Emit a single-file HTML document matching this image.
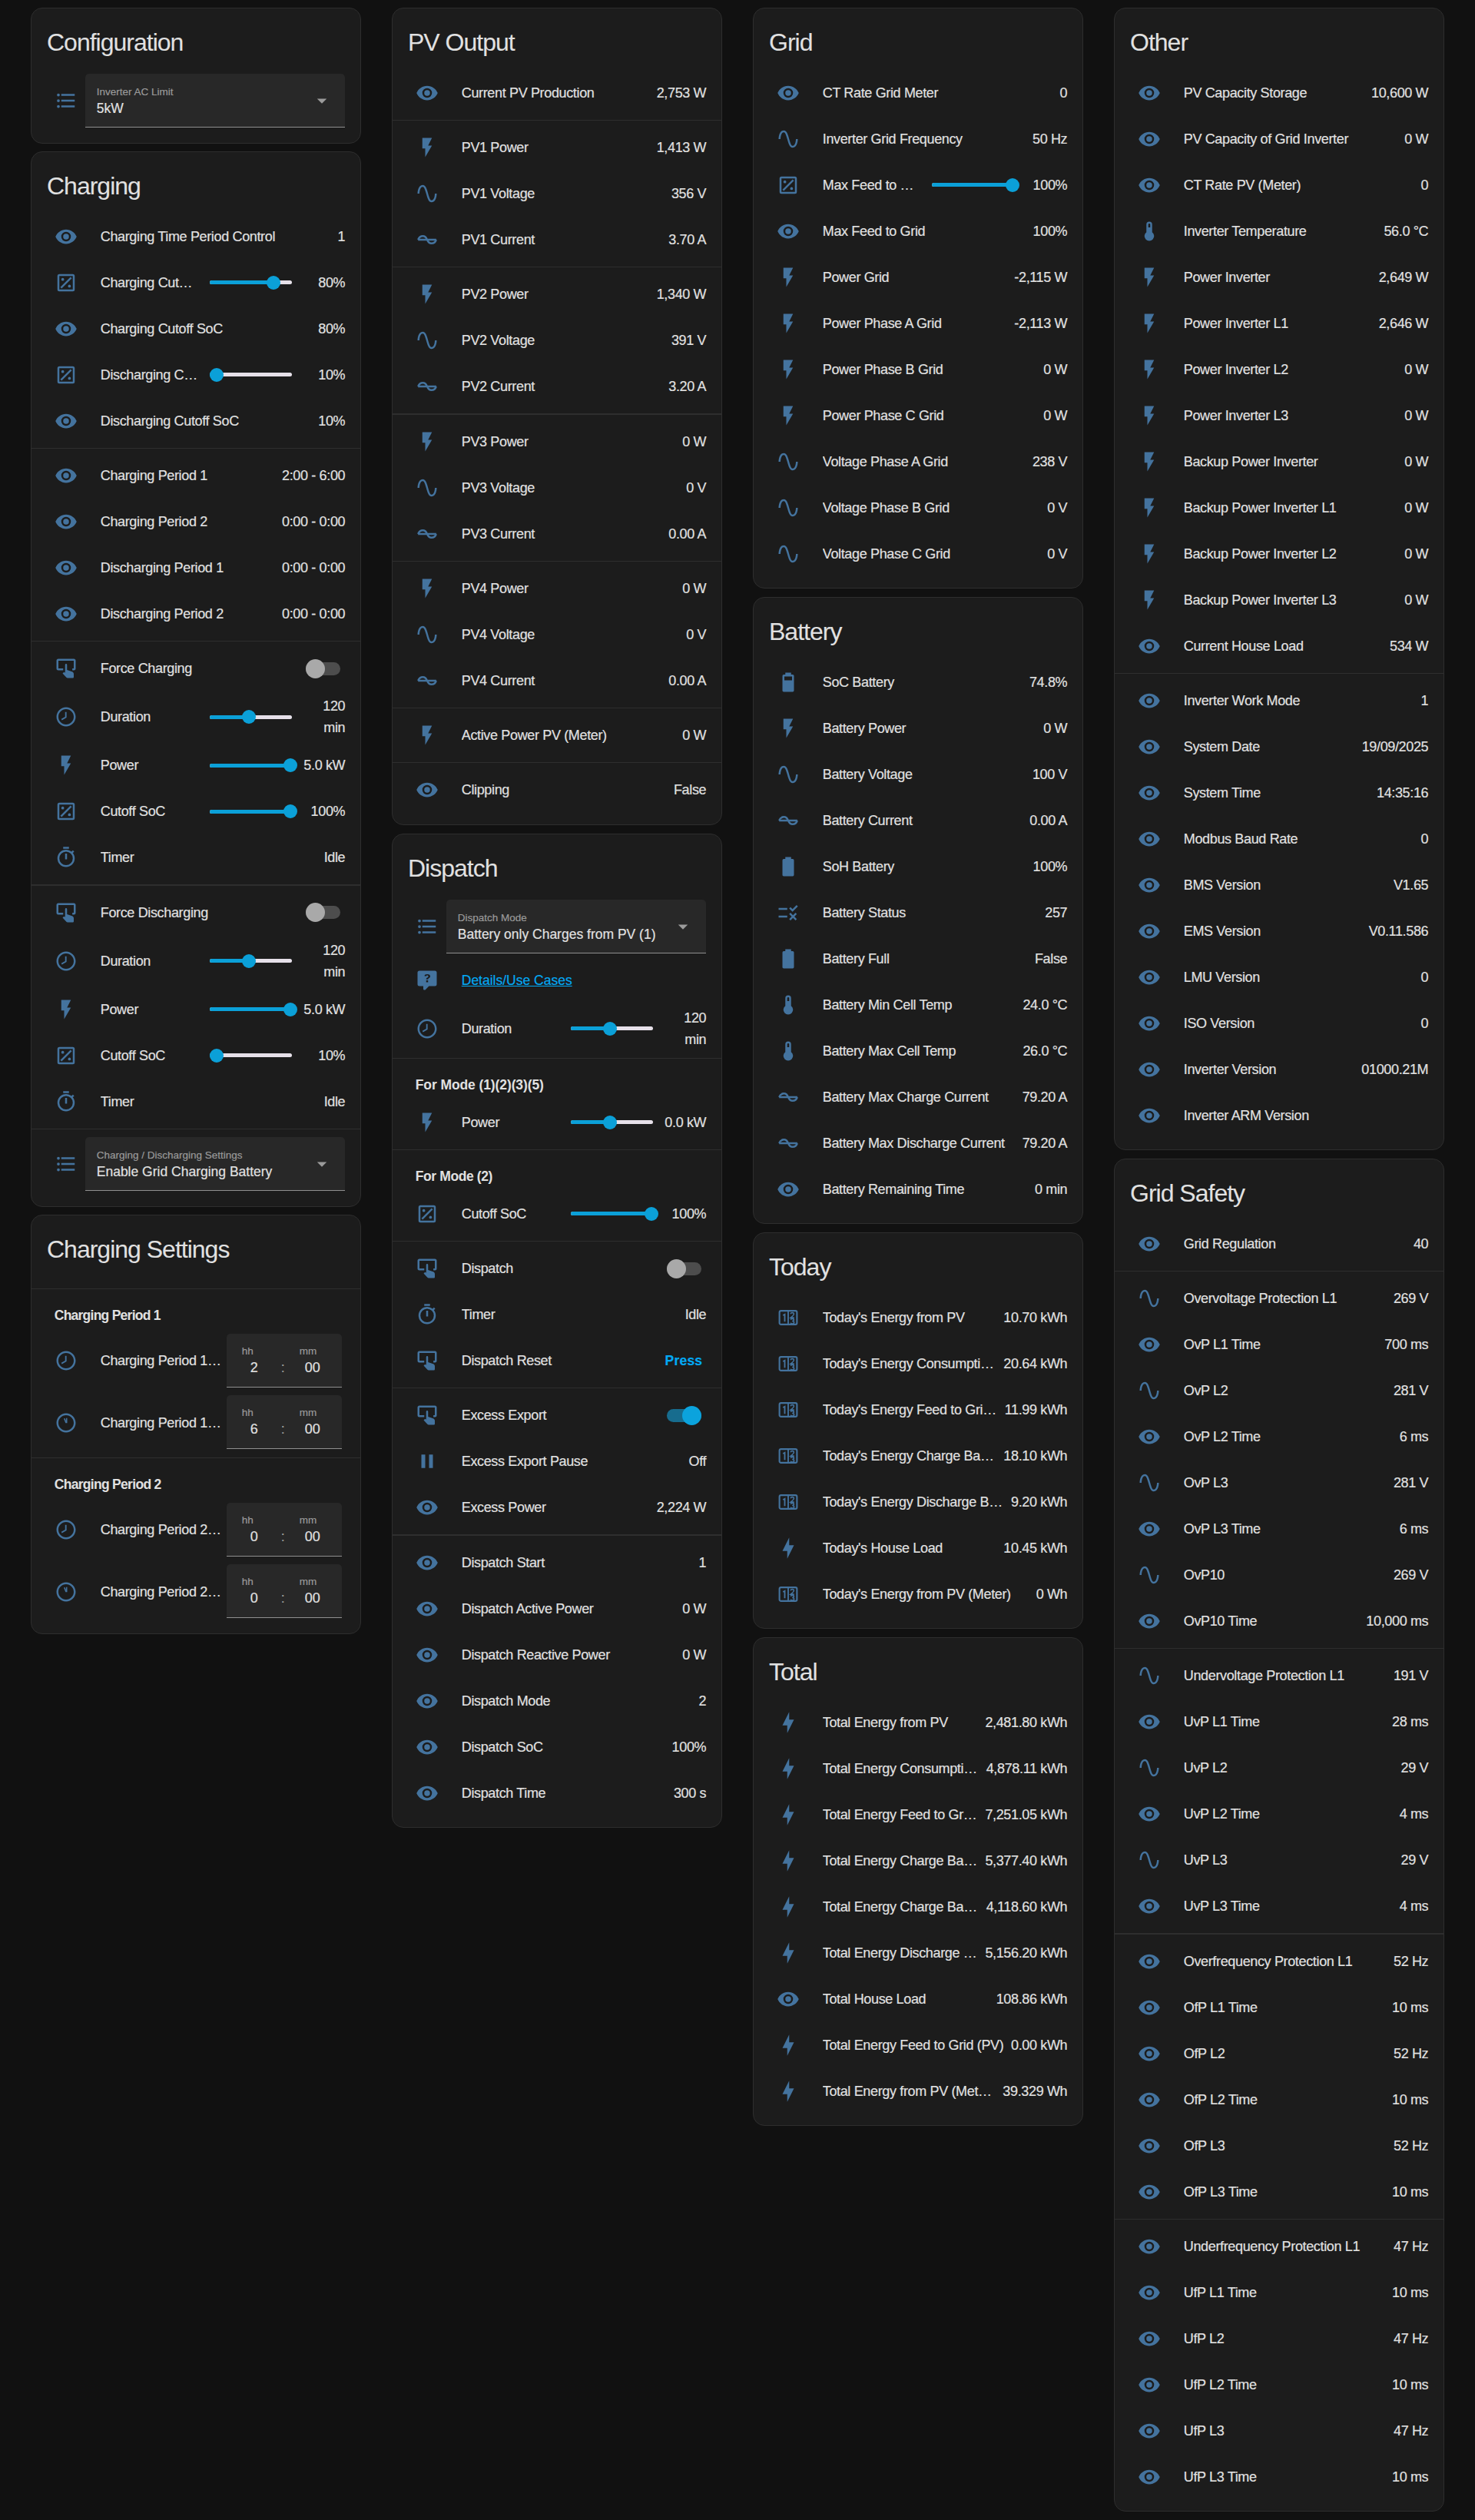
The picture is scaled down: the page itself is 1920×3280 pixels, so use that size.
<!DOCTYPE html><html><head><meta charset="utf-8"><title>Dashboard</title><style>
*{margin:0;padding:0;box-sizing:border-box}
html,body{width:1920px;height:3280px;background:#111111;overflow:hidden}
body{position:relative;font-family:"Liberation Sans",sans-serif;color:#e1e1e1;-webkit-font-smoothing:antialiased;-webkit-text-stroke:0.18px currentColor}
.card{position:absolute;width:430px;background:#1c1c1c;border:1.25px solid #2e2e2e;border-radius:15px}
.card>*{position:absolute}
.tt{left:20px;top:24.1px;font-size:32px;line-height:40px;letter-spacing:-1px;-webkit-text-stroke:0.05px currentColor;white-space:nowrap}
.ic{fill:#44739e;color:#44739e}
.lb{left:89.75px;height:50px;line-height:50px;font-size:18px;white-space:nowrap;letter-spacing:-0.35px}
.vl{right:19.75px;height:50px;line-height:50px;font-size:18px;white-space:nowrap;text-align:right;letter-spacing:-0.35px}
.v2{height:56px;line-height:28px}
.rw{left:89.75px;right:19.75px;height:50px;line-height:50px;font-size:18px;letter-spacing:-0.35px;display:flex;white-space:nowrap}
.rw .l{flex:1 1 auto;min-width:0;overflow:hidden;text-overflow:ellipsis}
.rw .v{flex:none;margin-left:8px}
.dv{left:-1.25px;right:-1.25px;height:1.25px;background:#2e2e2e}
.sec{left:29.75px;height:50px;line-height:50px;font-size:17.5px;font-weight:bold;letter-spacing:-0.6px;white-space:nowrap;-webkit-text-stroke:0}
.tr{left:231.75px;width:107px;height:5px;border-radius:3px;background:#e6e0e9}
.ta{left:231.75px;height:5px;border-radius:3px;background:#0ba0d8}
.th{width:18px;height:18px;border-radius:50%;background:#0ba0d8;margin-left:-1.25px}
.tg{left:356.75px;width:45px;height:17px;border-radius:9px;background:#4d4d4d}
.tk{left:356.75px;width:25px;height:25px;border-radius:50%;background:#a9a9a9}
.tg.on{background:#176c8e}
.tk.on{left:376.75px;background:#0ba3dd}
.bt{right:24.75px;height:50px;line-height:50px;font-size:17.5px;font-weight:bold;color:#03a9f4;letter-spacing:0.2px}
.lk{left:89.75px;height:50px;line-height:50px;font-size:17.5px;color:#03a9f4;text-decoration:underline}
.se{left:69.75px;width:338px;height:70px;background:#282828;border-radius:5px 5px 0 0;border-bottom:1.25px solid #8f8f8f}
.se>*{position:absolute}
.sl1{left:15px;top:14px;font-size:13.5px;line-height:20px;color:#9b9b9b;white-space:nowrap}
.sv{left:15px;top:33px;font-size:17.5px;line-height:24px;color:#e1e1e1;white-space:nowrap}
.dd{left:293px;top:20px;fill:#9b9b9b}
.ti{left:253.75px;width:150px;height:70px;background:#282828;border-radius:5px 5px 0 0;border-bottom:1.25px solid #8f8f8f}
.ti>*{position:absolute;white-space:nowrap}
.hh,.mm{top:14px;font-size:13.5px;line-height:18px;color:#9b9b9b}
.hh{left:20px}.mm{left:95px}
.hv,.mv,.co{top:32px;font-size:18px;line-height:24px}
.hv{left:31px}.mv{left:102px}.co{left:71px;color:#9b9b9b}
</style></head><body><div class="card" style="left:40px;top:10px;height:176.5px">
<div class="tt">Configuration</div>
<svg class="ic" style="left:29.75px;top:105px" width="30" height="30" viewBox="0 0 24 24"><path d="M7,5H21V7H7V5M7,13V11H21V13H7M4,4.5A1.5,1.5 0 0,1 5.5,6A1.5,1.5 0 0,1 4,7.5A1.5,1.5 0 0,1 2.5,6A1.5,1.5 0 0,1 4,4.5M4,10.5A1.5,1.5 0 0,1 5.5,12A1.5,1.5 0 0,1 4,13.5A1.5,1.5 0 0,1 2.5,12A1.5,1.5 0 0,1 4,10.5M7,19V17H21V19H7M4,16.5A1.5,1.5 0 0,1 5.5,18A1.5,1.5 0 0,1 4,19.5A1.5,1.5 0 0,1 2.5,18A1.5,1.5 0 0,1 4,16.5Z"/></svg><div class="se" style="top:84.75px"><div class="sl1">Inverter AC Limit</div><div class="sv">5kW</div><svg class="dd" width="30" height="30" viewBox="0 0 24 24"><path d="M7,10L12,15L17,10H7Z"/></svg></div>
</div>
<div class="card" style="left:40px;top:197px;height:1373.5px">
<div class="tt">Charging</div>
<svg class="ic" style="left:29.75px;top:94.75px" width="30" height="30" viewBox="0 0 24 24"><path d="M12,9A3,3 0 0,0 9,12A3,3 0 0,0 12,15A3,3 0 0,0 15,12A3,3 0 0,0 12,9M12,17A5,5 0 0,1 7,12A5,5 0 0,1 12,7A5,5 0 0,1 17,12A5,5 0 0,1 12,17M12,4.5C7,4.5 2.73,7.61 1,12C2.73,16.39 7,19.5 12,19.5C17,19.5 21.27,16.39 23,12C21.27,7.61 17,4.5 12,4.5Z"/></svg><div class="rw" style="top:84.75px"><span class="l">Charging Time Period Control</span><span class="v">1</span></div><svg class="ic" style="left:29.75px;top:154.75px" width="30" height="30" viewBox="0 0 24 24"><path d="M5 3H19A2 2 0 0 1 21 5V19A2 2 0 0 1 19 21H5A2 2 0 0 1 3 19V5A2 2 0 0 1 5 3M5 5V19H19V5Z" fill-rule="evenodd"/><path d="M16.6 6L18 7.4L7.4 18L6 16.6Z"/><circle cx="8.5" cy="8.5" r="1.5"/><circle cx="15.5" cy="15.5" r="1.5"/></svg><div class="lb sl" style="top:144.75px">Charging Cut…</div><div class="tr" style="top:167.25px"></div><div class="ta" style="top:167.25px;width:83.66px"></div><div class="th" style="top:160.75px;left:307.66px"></div><div class="vl" style="top:144.75px">80%</div><svg class="ic" style="left:29.75px;top:214.75px" width="30" height="30" viewBox="0 0 24 24"><path d="M12,9A3,3 0 0,0 9,12A3,3 0 0,0 12,15A3,3 0 0,0 15,12A3,3 0 0,0 12,9M12,17A5,5 0 0,1 7,12A5,5 0 0,1 12,7A5,5 0 0,1 17,12A5,5 0 0,1 12,17M12,4.5C7,4.5 2.73,7.61 1,12C2.73,16.39 7,19.5 12,19.5C17,19.5 21.27,16.39 23,12C21.27,7.61 17,4.5 12,4.5Z"/></svg><div class="rw" style="top:204.75px"><span class="l">Charging Cutoff SoC</span><span class="v">80%</span></div><svg class="ic" style="left:29.75px;top:274.75px" width="30" height="30" viewBox="0 0 24 24"><path d="M5 3H19A2 2 0 0 1 21 5V19A2 2 0 0 1 19 21H5A2 2 0 0 1 3 19V5A2 2 0 0 1 5 3M5 5V19H19V5Z" fill-rule="evenodd"/><path d="M16.6 6L18 7.4L7.4 18L6 16.6Z"/><circle cx="8.5" cy="8.5" r="1.5"/><circle cx="15.5" cy="15.5" r="1.5"/></svg><div class="lb sl" style="top:264.75px">Discharging C…</div><div class="tr" style="top:287.25px"></div><div class="ta" style="top:287.25px;width:8.97px"></div><div class="th" style="top:280.75px;left:232.97px"></div><div class="vl" style="top:264.75px">10%</div><svg class="ic" style="left:29.75px;top:334.75px" width="30" height="30" viewBox="0 0 24 24"><path d="M12,9A3,3 0 0,0 9,12A3,3 0 0,0 12,15A3,3 0 0,0 15,12A3,3 0 0,0 12,9M12,17A5,5 0 0,1 7,12A5,5 0 0,1 12,7A5,5 0 0,1 17,12A5,5 0 0,1 12,17M12,4.5C7,4.5 2.73,7.61 1,12C2.73,16.39 7,19.5 12,19.5C17,19.5 21.27,16.39 23,12C21.27,7.61 17,4.5 12,4.5Z"/></svg><div class="rw" style="top:324.75px"><span class="l">Discharging Cutoff SoC</span><span class="v">10%</span></div><div class="dv" style="top:384.75px"></div><svg class="ic" style="left:29.75px;top:406px" width="30" height="30" viewBox="0 0 24 24"><path d="M12,9A3,3 0 0,0 9,12A3,3 0 0,0 12,15A3,3 0 0,0 15,12A3,3 0 0,0 12,9M12,17A5,5 0 0,1 7,12A5,5 0 0,1 12,7A5,5 0 0,1 17,12A5,5 0 0,1 12,17M12,4.5C7,4.5 2.73,7.61 1,12C2.73,16.39 7,19.5 12,19.5C17,19.5 21.27,16.39 23,12C21.27,7.61 17,4.5 12,4.5Z"/></svg><div class="rw" style="top:396px"><span class="l">Charging Period 1</span><span class="v">2:00 - 6:00</span></div><svg class="ic" style="left:29.75px;top:466px" width="30" height="30" viewBox="0 0 24 24"><path d="M12,9A3,3 0 0,0 9,12A3,3 0 0,0 12,15A3,3 0 0,0 15,12A3,3 0 0,0 12,9M12,17A5,5 0 0,1 7,12A5,5 0 0,1 12,7A5,5 0 0,1 17,12A5,5 0 0,1 12,17M12,4.5C7,4.5 2.73,7.61 1,12C2.73,16.39 7,19.5 12,19.5C17,19.5 21.27,16.39 23,12C21.27,7.61 17,4.5 12,4.5Z"/></svg><div class="rw" style="top:456px"><span class="l">Charging Period 2</span><span class="v">0:00 - 0:00</span></div><svg class="ic" style="left:29.75px;top:526px" width="30" height="30" viewBox="0 0 24 24"><path d="M12,9A3,3 0 0,0 9,12A3,3 0 0,0 12,15A3,3 0 0,0 15,12A3,3 0 0,0 12,9M12,17A5,5 0 0,1 7,12A5,5 0 0,1 12,7A5,5 0 0,1 17,12A5,5 0 0,1 12,17M12,4.5C7,4.5 2.73,7.61 1,12C2.73,16.39 7,19.5 12,19.5C17,19.5 21.27,16.39 23,12C21.27,7.61 17,4.5 12,4.5Z"/></svg><div class="rw" style="top:516px"><span class="l">Discharging Period 1</span><span class="v">0:00 - 0:00</span></div><svg class="ic" style="left:29.75px;top:586px" width="30" height="30" viewBox="0 0 24 24"><path d="M12,9A3,3 0 0,0 9,12A3,3 0 0,0 12,15A3,3 0 0,0 15,12A3,3 0 0,0 12,9M12,17A5,5 0 0,1 7,12A5,5 0 0,1 12,7A5,5 0 0,1 17,12A5,5 0 0,1 12,17M12,4.5C7,4.5 2.73,7.61 1,12C2.73,16.39 7,19.5 12,19.5C17,19.5 21.27,16.39 23,12C21.27,7.61 17,4.5 12,4.5Z"/></svg><div class="rw" style="top:576px"><span class="l">Discharging Period 2</span><span class="v">0:00 - 0:00</span></div><div class="dv" style="top:636px"></div><svg class="ic" style="left:29.75px;top:657.25px" width="30" height="30" viewBox="0 0 24 24"><path d="M4 2H20A2 2 0 0 1 22 4V12A2 2 0 0 1 20 14H18.5V12H20V4H4V12H9V14H4A2 2 0 0 1 2 12V4A2 2 0 0 1 4 2Z"/><path d="M11 8.2A1 1 0 0 1 13 8.2V13.6L18.3 15.4C19.4 15.8 20 16.7 20 17.8V21A1 1 0 0 1 19 22H13.6C13.1 22 12.6 21.8 12.3 21.4L8.4 17.2L9.2 16.4C9.5 16.1 9.9 16 10.3 16.1L11 16.4Z"/></svg><div class="lb" style="top:647.25px">Force Charging</div><div class="tg" style="top:663.75px"></div><div class="tk" style="top:659.75px"></div><svg class="ic" style="left:29.75px;top:720.25px" width="30" height="30" viewBox="0 0 24 24"><path d="M12 2C6.5 2 2 6.5 2 12C2 17.5 6.5 22 12 22C17.5 22 22 17.5 22 12S17.5 2 12 2M12 20C7.59 20 4 16.41 4 12S7.59 4 12 4 20 7.59 20 12 16.41 20 12 20M12.5 12.8L7.7 15.6L7 14.2L11 11.9V7H12.5V12.8Z"/></svg><div class="lb sl" style="top:710.25px">Duration</div><div class="tr" style="top:732.75px"></div><div class="ta" style="top:732.75px;width:51.65px"></div><div class="th" style="top:726.25px;left:275.65px"></div><div class="vl v2" style="top:707.25px">120<br>min</div><svg class="ic" style="left:29.75px;top:783.25px" width="30" height="30" viewBox="0 0 24 24"><path d="M7,2V13H10V22L17,10H13L17,2H7Z"/></svg><div class="lb sl" style="top:773.25px">Power</div><div class="tr" style="top:795.75px"></div><div class="ta" style="top:795.75px;width:105px"></div><div class="th" style="top:789.25px;left:329px"></div><div class="vl" style="top:773.25px">5.0 kW</div><svg class="ic" style="left:29.75px;top:843.25px" width="30" height="30" viewBox="0 0 24 24"><path d="M5 3H19A2 2 0 0 1 21 5V19A2 2 0 0 1 19 21H5A2 2 0 0 1 3 19V5A2 2 0 0 1 5 3M5 5V19H19V5Z" fill-rule="evenodd"/><path d="M16.6 6L18 7.4L7.4 18L6 16.6Z"/><circle cx="8.5" cy="8.5" r="1.5"/><circle cx="15.5" cy="15.5" r="1.5"/></svg><div class="lb sl" style="top:833.25px">Cutoff SoC</div><div class="tr" style="top:855.75px"></div><div class="ta" style="top:855.75px;width:105px"></div><div class="th" style="top:849.25px;left:329px"></div><div class="vl" style="top:833.25px">100%</div><svg class="ic" style="left:29.75px;top:903.25px" width="30" height="30" viewBox="0 0 24 24"><path d="M12,20A7,7 0 0,1 5,13A7,7 0 0,1 12,6A7,7 0 0,1 19,13A7,7 0 0,1 12,20M19.03,7.39L20.45,5.97C20,5.46 19.55,5 19.04,4.56L17.62,6C16.07,4.74 14.12,4 12,4A9,9 0 0,0 3,13A9,9 0 0,0 12,22C17,22 21,17.97 21,13C21,10.88 20.26,8.93 19.03,7.39M11,14H13V8H11M15,1H9V3H15V1Z"/></svg><div class="rw" style="top:893.25px"><span class="l">Timer</span><span class="v">Idle</span></div><div class="dv" style="top:953.25px"></div><svg class="ic" style="left:29.75px;top:974.5px" width="30" height="30" viewBox="0 0 24 24"><path d="M4 2H20A2 2 0 0 1 22 4V12A2 2 0 0 1 20 14H18.5V12H20V4H4V12H9V14H4A2 2 0 0 1 2 12V4A2 2 0 0 1 4 2Z"/><path d="M11 8.2A1 1 0 0 1 13 8.2V13.6L18.3 15.4C19.4 15.8 20 16.7 20 17.8V21A1 1 0 0 1 19 22H13.6C13.1 22 12.6 21.8 12.3 21.4L8.4 17.2L9.2 16.4C9.5 16.1 9.9 16 10.3 16.1L11 16.4Z"/></svg><div class="lb" style="top:964.5px">Force Discharging</div><div class="tg" style="top:981px"></div><div class="tk" style="top:977px"></div><svg class="ic" style="left:29.75px;top:1037.5px" width="30" height="30" viewBox="0 0 24 24"><path d="M12 2C6.5 2 2 6.5 2 12C2 17.5 6.5 22 12 22C17.5 22 22 17.5 22 12S17.5 2 12 2M12 20C7.59 20 4 16.41 4 12S7.59 4 12 4 20 7.59 20 12 16.41 20 12 20M12.5 12.8L7.7 15.6L7 14.2L11 11.9V7H12.5V12.8Z"/></svg><div class="lb sl" style="top:1027.5px">Duration</div><div class="tr" style="top:1050px"></div><div class="ta" style="top:1050px;width:51.65px"></div><div class="th" style="top:1043.5px;left:275.65px"></div><div class="vl v2" style="top:1024.5px">120<br>min</div><svg class="ic" style="left:29.75px;top:1100.5px" width="30" height="30" viewBox="0 0 24 24"><path d="M7,2V13H10V22L17,10H13L17,2H7Z"/></svg><div class="lb sl" style="top:1090.5px">Power</div><div class="tr" style="top:1113px"></div><div class="ta" style="top:1113px;width:105px"></div><div class="th" style="top:1106.5px;left:329px"></div><div class="vl" style="top:1090.5px">5.0 kW</div><svg class="ic" style="left:29.75px;top:1160.5px" width="30" height="30" viewBox="0 0 24 24"><path d="M5 3H19A2 2 0 0 1 21 5V19A2 2 0 0 1 19 21H5A2 2 0 0 1 3 19V5A2 2 0 0 1 5 3M5 5V19H19V5Z" fill-rule="evenodd"/><path d="M16.6 6L18 7.4L7.4 18L6 16.6Z"/><circle cx="8.5" cy="8.5" r="1.5"/><circle cx="15.5" cy="15.5" r="1.5"/></svg><div class="lb sl" style="top:1150.5px">Cutoff SoC</div><div class="tr" style="top:1173px"></div><div class="ta" style="top:1173px;width:8.97px"></div><div class="th" style="top:1166.5px;left:232.97px"></div><div class="vl" style="top:1150.5px">10%</div><svg class="ic" style="left:29.75px;top:1220.5px" width="30" height="30" viewBox="0 0 24 24"><path d="M12,20A7,7 0 0,1 5,13A7,7 0 0,1 12,6A7,7 0 0,1 19,13A7,7 0 0,1 12,20M19.03,7.39L20.45,5.97C20,5.46 19.55,5 19.04,4.56L17.62,6C16.07,4.74 14.12,4 12,4A9,9 0 0,0 3,13A9,9 0 0,0 12,22C17,22 21,17.97 21,13C21,10.88 20.26,8.93 19.03,7.39M11,14H13V8H11M15,1H9V3H15V1Z"/></svg><div class="rw" style="top:1210.5px"><span class="l">Timer</span><span class="v">Idle</span></div><div class="dv" style="top:1270.5px"></div><svg class="ic" style="left:29.75px;top:1302px" width="30" height="30" viewBox="0 0 24 24"><path d="M7,5H21V7H7V5M7,13V11H21V13H7M4,4.5A1.5,1.5 0 0,1 5.5,6A1.5,1.5 0 0,1 4,7.5A1.5,1.5 0 0,1 2.5,6A1.5,1.5 0 0,1 4,4.5M4,10.5A1.5,1.5 0 0,1 5.5,12A1.5,1.5 0 0,1 4,13.5A1.5,1.5 0 0,1 2.5,12A1.5,1.5 0 0,1 4,10.5M7,19V17H21V19H7M4,16.5A1.5,1.5 0 0,1 5.5,18A1.5,1.5 0 0,1 4,19.5A1.5,1.5 0 0,1 2.5,18A1.5,1.5 0 0,1 4,16.5Z"/></svg><div class="se" style="top:1281.75px"><div class="sl1">Charging / Discharging Settings</div><div class="sv">Enable Grid Charging Battery</div><svg class="dd" width="30" height="30" viewBox="0 0 24 24"><path d="M7,10L12,15L17,10H7Z"/></svg></div>
</div>
<div class="card" style="left:40px;top:1581px;height:546px">
<div class="tt">Charging Settings</div>
<div class="dv" style="top:94.75px"></div><div class="sec" style="top:104.75px;letter-spacing:-0.75px">Charging Period 1</div><svg class="ic" style="left:29.75px;top:174px" width="30" height="30" viewBox="0 0 24 24"><path d="M12 2C6.5 2 2 6.5 2 12C2 17.5 6.5 22 12 22C17.5 22 22 17.5 22 12S17.5 2 12 2M12 20C7.59 20 4 16.41 4 12S7.59 4 12 4 20 7.59 20 12 16.41 20 12 20M12.5 12.8L7.7 15.6L7 14.2L11 11.9V7H12.5V12.8Z"/></svg><div class="lb tl" style="top:164px">Charging Period 1…</div><div class="ti" style="top:153.75px"><span class="hh">hh</span><span class="mm">mm</span><span class="hv">2</span><span class="co">:</span><span class="mv">00</span></div><svg class="ic" style="left:29.75px;top:254.5px" width="30" height="30" viewBox="0 0 24 24"><path d="M12 2C6.5 2 2 6.5 2 12C2 17.5 6.5 22 12 22C17.5 22 22 17.5 22 12S17.5 2 12 2M12 20C7.59 20 4 16.41 4 12S7.59 4 12 4 20 7.59 20 12 16.41 20 12 20M12.6 12.2H11.4L9.6 7.6L10.9 7.1L12 9.9V7H13.2V12.2Z"/></svg><div class="lb tl" style="top:244.5px">Charging Period 1…</div><div class="ti" style="top:234.25px"><span class="hh">hh</span><span class="mm">mm</span><span class="hv">6</span><span class="co">:</span><span class="mv">00</span></div><div class="dv" style="top:314.75px"></div><div class="sec" style="top:324.75px;letter-spacing:-0.7px">Charging Period 2</div><svg class="ic" style="left:29.75px;top:394px" width="30" height="30" viewBox="0 0 24 24"><path d="M12 2C6.5 2 2 6.5 2 12C2 17.5 6.5 22 12 22C17.5 22 22 17.5 22 12S17.5 2 12 2M12 20C7.59 20 4 16.41 4 12S7.59 4 12 4 20 7.59 20 12 16.41 20 12 20M12.5 12.8L7.7 15.6L7 14.2L11 11.9V7H12.5V12.8Z"/></svg><div class="lb tl" style="top:384px">Charging Period 2…</div><div class="ti" style="top:373.75px"><span class="hh">hh</span><span class="mm">mm</span><span class="hv">0</span><span class="co">:</span><span class="mv">00</span></div><svg class="ic" style="left:29.75px;top:474.5px" width="30" height="30" viewBox="0 0 24 24"><path d="M12 2C6.5 2 2 6.5 2 12C2 17.5 6.5 22 12 22C17.5 22 22 17.5 22 12S17.5 2 12 2M12 20C7.59 20 4 16.41 4 12S7.59 4 12 4 20 7.59 20 12 16.41 20 12 20M12.6 12.2H11.4L9.6 7.6L10.9 7.1L12 9.9V7H13.2V12.2Z"/></svg><div class="lb tl" style="top:464.5px">Charging Period 2…</div><div class="ti" style="top:454.25px"><span class="hh">hh</span><span class="mm">mm</span><span class="hv">0</span><span class="co">:</span><span class="mv">00</span></div>
</div>
<div class="card" style="left:510px;top:10px;height:1063.5px">
<div class="tt">PV Output</div>
<svg class="ic" style="left:29.75px;top:94.75px" width="30" height="30" viewBox="0 0 24 24"><path d="M12,9A3,3 0 0,0 9,12A3,3 0 0,0 12,15A3,3 0 0,0 15,12A3,3 0 0,0 12,9M12,17A5,5 0 0,1 7,12A5,5 0 0,1 12,7A5,5 0 0,1 17,12A5,5 0 0,1 12,17M12,4.5C7,4.5 2.73,7.61 1,12C2.73,16.39 7,19.5 12,19.5C17,19.5 21.27,16.39 23,12C21.27,7.61 17,4.5 12,4.5Z"/></svg><div class="rw" style="top:84.75px"><span class="l">Current PV Production</span><span class="v">2,753 W</span></div><div class="dv" style="top:144.75px"></div><svg class="ic" style="left:29.75px;top:166px" width="30" height="30" viewBox="0 0 24 24"><path d="M7,2V13H10V22L17,10H13L17,2H7Z"/></svg><div class="rw" style="top:156px"><span class="l">PV1 Power</span><span class="v">1,413 W</span></div><svg class="ic" style="left:29.75px;top:226px" width="30" height="30" viewBox="0 0 24 24"><path d="M16.5,21C13.5,21 12.31,16.76 11.05,12.28C10.14,9.04 9,5 7.5,5C4.11,5 4,11.93 4,12H2C2,11.63 2.06,3 7.5,3C10.5,3 11.71,7.25 12.97,11.72C13.83,14.8 15,19 16.5,19C19.94,19 20.03,12.07 20.03,12H22.03C22.03,12.37 21.97,21 16.5,21Z"/></svg><div class="rw" style="top:216px"><span class="l">PV1 Voltage</span><span class="v">356 V</span></div><svg class="ic" style="left:29.75px;top:286px" width="30" height="30" viewBox="0 0 24 24"><path d="M2.5 12H21.5M2.5 12C4 8.6 6 8.2 7.5 8.2S11 9.5 12 12S15 15.8 16.5 15.8S20.5 15 21.5 12" fill="none" stroke="currentColor" stroke-width="1.9"/></svg><div class="rw" style="top:276px"><span class="l">PV1 Current</span><span class="v">3.70 A</span></div><div class="dv" style="top:336px"></div><svg class="ic" style="left:29.75px;top:357.25px" width="30" height="30" viewBox="0 0 24 24"><path d="M7,2V13H10V22L17,10H13L17,2H7Z"/></svg><div class="rw" style="top:347.25px"><span class="l">PV2 Power</span><span class="v">1,340 W</span></div><svg class="ic" style="left:29.75px;top:417.25px" width="30" height="30" viewBox="0 0 24 24"><path d="M16.5,21C13.5,21 12.31,16.76 11.05,12.28C10.14,9.04 9,5 7.5,5C4.11,5 4,11.93 4,12H2C2,11.63 2.06,3 7.5,3C10.5,3 11.71,7.25 12.97,11.72C13.83,14.8 15,19 16.5,19C19.94,19 20.03,12.07 20.03,12H22.03C22.03,12.37 21.97,21 16.5,21Z"/></svg><div class="rw" style="top:407.25px"><span class="l">PV2 Voltage</span><span class="v">391 V</span></div><svg class="ic" style="left:29.75px;top:477.25px" width="30" height="30" viewBox="0 0 24 24"><path d="M2.5 12H21.5M2.5 12C4 8.6 6 8.2 7.5 8.2S11 9.5 12 12S15 15.8 16.5 15.8S20.5 15 21.5 12" fill="none" stroke="currentColor" stroke-width="1.9"/></svg><div class="rw" style="top:467.25px"><span class="l">PV2 Current</span><span class="v">3.20 A</span></div><div class="dv" style="top:527.25px"></div><svg class="ic" style="left:29.75px;top:548.5px" width="30" height="30" viewBox="0 0 24 24"><path d="M7,2V13H10V22L17,10H13L17,2H7Z"/></svg><div class="rw" style="top:538.5px"><span class="l">PV3 Power</span><span class="v">0 W</span></div><svg class="ic" style="left:29.75px;top:608.5px" width="30" height="30" viewBox="0 0 24 24"><path d="M16.5,21C13.5,21 12.31,16.76 11.05,12.28C10.14,9.04 9,5 7.5,5C4.11,5 4,11.93 4,12H2C2,11.63 2.06,3 7.5,3C10.5,3 11.71,7.25 12.97,11.72C13.83,14.8 15,19 16.5,19C19.94,19 20.03,12.07 20.03,12H22.03C22.03,12.37 21.97,21 16.5,21Z"/></svg><div class="rw" style="top:598.5px"><span class="l">PV3 Voltage</span><span class="v">0 V</span></div><svg class="ic" style="left:29.75px;top:668.5px" width="30" height="30" viewBox="0 0 24 24"><path d="M2.5 12H21.5M2.5 12C4 8.6 6 8.2 7.5 8.2S11 9.5 12 12S15 15.8 16.5 15.8S20.5 15 21.5 12" fill="none" stroke="currentColor" stroke-width="1.9"/></svg><div class="rw" style="top:658.5px"><span class="l">PV3 Current</span><span class="v">0.00 A</span></div><div class="dv" style="top:718.5px"></div><svg class="ic" style="left:29.75px;top:739.75px" width="30" height="30" viewBox="0 0 24 24"><path d="M7,2V13H10V22L17,10H13L17,2H7Z"/></svg><div class="rw" style="top:729.75px"><span class="l">PV4 Power</span><span class="v">0 W</span></div><svg class="ic" style="left:29.75px;top:799.75px" width="30" height="30" viewBox="0 0 24 24"><path d="M16.5,21C13.5,21 12.31,16.76 11.05,12.28C10.14,9.04 9,5 7.5,5C4.11,5 4,11.93 4,12H2C2,11.63 2.06,3 7.5,3C10.5,3 11.71,7.25 12.97,11.72C13.83,14.8 15,19 16.5,19C19.94,19 20.03,12.07 20.03,12H22.03C22.03,12.37 21.97,21 16.5,21Z"/></svg><div class="rw" style="top:789.75px"><span class="l">PV4 Voltage</span><span class="v">0 V</span></div><svg class="ic" style="left:29.75px;top:859.75px" width="30" height="30" viewBox="0 0 24 24"><path d="M2.5 12H21.5M2.5 12C4 8.6 6 8.2 7.5 8.2S11 9.5 12 12S15 15.8 16.5 15.8S20.5 15 21.5 12" fill="none" stroke="currentColor" stroke-width="1.9"/></svg><div class="rw" style="top:849.75px"><span class="l">PV4 Current</span><span class="v">0.00 A</span></div><div class="dv" style="top:909.75px"></div><svg class="ic" style="left:29.75px;top:931px" width="30" height="30" viewBox="0 0 24 24"><path d="M7,2V13H10V22L17,10H13L17,2H7Z"/></svg><div class="rw" style="top:921px"><span class="l">Active Power PV (Meter)</span><span class="v">0 W</span></div><div class="dv" style="top:981px"></div><svg class="ic" style="left:29.75px;top:1002.25px" width="30" height="30" viewBox="0 0 24 24"><path d="M12,9A3,3 0 0,0 9,12A3,3 0 0,0 12,15A3,3 0 0,0 15,12A3,3 0 0,0 12,9M12,17A5,5 0 0,1 7,12A5,5 0 0,1 12,7A5,5 0 0,1 17,12A5,5 0 0,1 12,17M12,4.5C7,4.5 2.73,7.61 1,12C2.73,16.39 7,19.5 12,19.5C17,19.5 21.27,16.39 23,12C21.27,7.61 17,4.5 12,4.5Z"/></svg><div class="rw" style="top:992.25px"><span class="l">Clipping</span><span class="v">False</span></div>
</div>
<div class="card" style="left:510px;top:1085px;height:1293.75px">
<div class="tt">Dispatch</div>
<svg class="ic" style="left:29.75px;top:104.75px" width="30" height="30" viewBox="0 0 24 24"><path d="M7,5H21V7H7V5M7,13V11H21V13H7M4,4.5A1.5,1.5 0 0,1 5.5,6A1.5,1.5 0 0,1 4,7.5A1.5,1.5 0 0,1 2.5,6A1.5,1.5 0 0,1 4,4.5M4,10.5A1.5,1.5 0 0,1 5.5,12A1.5,1.5 0 0,1 4,13.5A1.5,1.5 0 0,1 2.5,12A1.5,1.5 0 0,1 4,10.5M7,19V17H21V19H7M4,16.5A1.5,1.5 0 0,1 5.5,18A1.5,1.5 0 0,1 4,19.5A1.5,1.5 0 0,1 2.5,18A1.5,1.5 0 0,1 4,16.5Z"/></svg><div class="se" style="top:84.75px"><div class="sl1">Dispatch Mode</div><div class="sv">Battery only Charges from PV (1)</div><svg class="dd" width="30" height="30" viewBox="0 0 24 24"><path d="M7,10L12,15L17,10H7Z"/></svg></div><svg class="ic" style="left:29.75px;top:174.75px" width="30" height="30" viewBox="0 0 24 24"><path d="M4,2H20A2,2 0 0,1 22,4V16A2,2 0 0,1 20,18H13.9L10.2,21.71C10,21.9 9.75,22 9.5,22H9A1,1 0 0,1 8,21V18H4A2,2 0 0,1 2,16V4A2,2 0 0,1 4,2Z"/><path fill="#1c1c1c" d="M12.19,5.5C11.3,5.5 10.59,5.68 10.05,6.04C9.5,6.4 9.22,7 9.27,7.69H11.24C11.24,7.41 11.34,7.2 11.5,7.06C11.7,6.92 11.92,6.85 12.19,6.85C12.5,6.85 12.77,6.93 12.95,7.11C13.13,7.28 13.22,7.5 13.22,7.8C13.22,8.08 13.14,8.33 13,8.54C12.83,8.76 12.62,8.94 12.36,9.08C11.84,9.4 11.5,9.68 11.29,9.92C11.1,10.16 11,10.5 11,11H13C13,10.72 13.05,10.5 13.14,10.32C13.23,10.15 13.4,10 13.66,9.85C14.12,9.64 14.5,9.36 14.79,9C15.08,8.63 15.23,8.24 15.23,7.8C15.23,7.1 14.96,6.54 14.42,6.12C13.88,5.71 13.13,5.5 12.19,5.5M11,12V14H13V12H11Z"/></svg><div class="lk" style="top:164.75px">Details/Use Cases</div><svg class="ic" style="left:29.75px;top:237.75px" width="30" height="30" viewBox="0 0 24 24"><path d="M12 2C6.5 2 2 6.5 2 12C2 17.5 6.5 22 12 22C17.5 22 22 17.5 22 12S17.5 2 12 2M12 20C7.59 20 4 16.41 4 12S7.59 4 12 4 20 7.59 20 12 16.41 20 12 20M12.5 12.8L7.7 15.6L7 14.2L11 11.9V7H12.5V12.8Z"/></svg><div class="lb sl" style="top:227.75px">Duration</div><div class="tr" style="top:250.25px"></div><div class="ta" style="top:250.25px;width:51.65px"></div><div class="th" style="top:243.75px;left:275.65px"></div><div class="vl v2" style="top:224.75px">120<br>min</div><div class="dv" style="top:290.75px"></div><div class="sec" style="top:300.75px;letter-spacing:-0.1px">For Mode (1)(2)(3)(5)</div><svg class="ic" style="left:29.75px;top:359.75px" width="30" height="30" viewBox="0 0 24 24"><path d="M7,2V13H10V22L17,10H13L17,2H7Z"/></svg><div class="lb sl" style="top:349.75px">Power</div><div class="tr" style="top:372.25px"></div><div class="ta" style="top:372.25px;width:51.65px"></div><div class="th" style="top:365.75px;left:275.65px"></div><div class="vl" style="top:349.75px">0.0 kW</div><div class="dv" style="top:409.75px"></div><div class="sec" style="top:419.75px;letter-spacing:-0.4px">For Mode (2)</div><svg class="ic" style="left:29.75px;top:478.75px" width="30" height="30" viewBox="0 0 24 24"><path d="M5 3H19A2 2 0 0 1 21 5V19A2 2 0 0 1 19 21H5A2 2 0 0 1 3 19V5A2 2 0 0 1 5 3M5 5V19H19V5Z" fill-rule="evenodd"/><path d="M16.6 6L18 7.4L7.4 18L6 16.6Z"/><circle cx="8.5" cy="8.5" r="1.5"/><circle cx="15.5" cy="15.5" r="1.5"/></svg><div class="lb sl" style="top:468.75px">Cutoff SoC</div><div class="tr" style="top:491.25px"></div><div class="ta" style="top:491.25px;width:105px"></div><div class="th" style="top:484.75px;left:329px"></div><div class="vl" style="top:468.75px">100%</div><div class="dv" style="top:528.75px"></div><svg class="ic" style="left:29.75px;top:550px" width="30" height="30" viewBox="0 0 24 24"><path d="M4 2H20A2 2 0 0 1 22 4V12A2 2 0 0 1 20 14H18.5V12H20V4H4V12H9V14H4A2 2 0 0 1 2 12V4A2 2 0 0 1 4 2Z"/><path d="M11 8.2A1 1 0 0 1 13 8.2V13.6L18.3 15.4C19.4 15.8 20 16.7 20 17.8V21A1 1 0 0 1 19 22H13.6C13.1 22 12.6 21.8 12.3 21.4L8.4 17.2L9.2 16.4C9.5 16.1 9.9 16 10.3 16.1L11 16.4Z"/></svg><div class="lb" style="top:540px">Dispatch</div><div class="tg" style="top:556.5px"></div><div class="tk" style="top:552.5px"></div><svg class="ic" style="left:29.75px;top:610px" width="30" height="30" viewBox="0 0 24 24"><path d="M12,20A7,7 0 0,1 5,13A7,7 0 0,1 12,6A7,7 0 0,1 19,13A7,7 0 0,1 12,20M19.03,7.39L20.45,5.97C20,5.46 19.55,5 19.04,4.56L17.62,6C16.07,4.74 14.12,4 12,4A9,9 0 0,0 3,13A9,9 0 0,0 12,22C17,22 21,17.97 21,13C21,10.88 20.26,8.93 19.03,7.39M11,14H13V8H11M15,1H9V3H15V1Z"/></svg><div class="rw" style="top:600px"><span class="l">Timer</span><span class="v">Idle</span></div><svg class="ic" style="left:29.75px;top:670px" width="30" height="30" viewBox="0 0 24 24"><path d="M4 2H20A2 2 0 0 1 22 4V12A2 2 0 0 1 20 14H18.5V12H20V4H4V12H9V14H4A2 2 0 0 1 2 12V4A2 2 0 0 1 4 2Z"/><path d="M11 8.2A1 1 0 0 1 13 8.2V13.6L18.3 15.4C19.4 15.8 20 16.7 20 17.8V21A1 1 0 0 1 19 22H13.6C13.1 22 12.6 21.8 12.3 21.4L8.4 17.2L9.2 16.4C9.5 16.1 9.9 16 10.3 16.1L11 16.4Z"/></svg><div class="lb" style="top:660px">Dispatch Reset</div><div class="bt" style="top:660px">Press</div><div class="dv" style="top:720px"></div><svg class="ic" style="left:29.75px;top:741.25px" width="30" height="30" viewBox="0 0 24 24"><path d="M4 2H20A2 2 0 0 1 22 4V12A2 2 0 0 1 20 14H18.5V12H20V4H4V12H9V14H4A2 2 0 0 1 2 12V4A2 2 0 0 1 4 2Z"/><path d="M11 8.2A1 1 0 0 1 13 8.2V13.6L18.3 15.4C19.4 15.8 20 16.7 20 17.8V21A1 1 0 0 1 19 22H13.6C13.1 22 12.6 21.8 12.3 21.4L8.4 17.2L9.2 16.4C9.5 16.1 9.9 16 10.3 16.1L11 16.4Z"/></svg><div class="lb" style="top:731.25px">Excess Export</div><div class="tg on" style="top:747.75px"></div><div class="tk on" style="top:743.75px"></div><svg class="ic" style="left:29.75px;top:801.25px" width="30" height="30" viewBox="0 0 24 24"><path d="M14,19H18V5H14M6,19H10V5H6V19Z"/></svg><div class="rw" style="top:791.25px"><span class="l">Excess Export Pause</span><span class="v">Off</span></div><svg class="ic" style="left:29.75px;top:861.25px" width="30" height="30" viewBox="0 0 24 24"><path d="M12,9A3,3 0 0,0 9,12A3,3 0 0,0 12,15A3,3 0 0,0 15,12A3,3 0 0,0 12,9M12,17A5,5 0 0,1 7,12A5,5 0 0,1 12,7A5,5 0 0,1 17,12A5,5 0 0,1 12,17M12,4.5C7,4.5 2.73,7.61 1,12C2.73,16.39 7,19.5 12,19.5C17,19.5 21.27,16.39 23,12C21.27,7.61 17,4.5 12,4.5Z"/></svg><div class="rw" style="top:851.25px"><span class="l">Excess Power</span><span class="v">2,224 W</span></div><div class="dv" style="top:911.25px"></div><svg class="ic" style="left:29.75px;top:932.5px" width="30" height="30" viewBox="0 0 24 24"><path d="M12,9A3,3 0 0,0 9,12A3,3 0 0,0 12,15A3,3 0 0,0 15,12A3,3 0 0,0 12,9M12,17A5,5 0 0,1 7,12A5,5 0 0,1 12,7A5,5 0 0,1 17,12A5,5 0 0,1 12,17M12,4.5C7,4.5 2.73,7.61 1,12C2.73,16.39 7,19.5 12,19.5C17,19.5 21.27,16.39 23,12C21.27,7.61 17,4.5 12,4.5Z"/></svg><div class="rw" style="top:922.5px"><span class="l">Dispatch Start</span><span class="v">1</span></div><svg class="ic" style="left:29.75px;top:992.5px" width="30" height="30" viewBox="0 0 24 24"><path d="M12,9A3,3 0 0,0 9,12A3,3 0 0,0 12,15A3,3 0 0,0 15,12A3,3 0 0,0 12,9M12,17A5,5 0 0,1 7,12A5,5 0 0,1 12,7A5,5 0 0,1 17,12A5,5 0 0,1 12,17M12,4.5C7,4.5 2.73,7.61 1,12C2.73,16.39 7,19.5 12,19.5C17,19.5 21.27,16.39 23,12C21.27,7.61 17,4.5 12,4.5Z"/></svg><div class="rw" style="top:982.5px"><span class="l">Dispatch Active Power</span><span class="v">0 W</span></div><svg class="ic" style="left:29.75px;top:1052.5px" width="30" height="30" viewBox="0 0 24 24"><path d="M12,9A3,3 0 0,0 9,12A3,3 0 0,0 12,15A3,3 0 0,0 15,12A3,3 0 0,0 12,9M12,17A5,5 0 0,1 7,12A5,5 0 0,1 12,7A5,5 0 0,1 17,12A5,5 0 0,1 12,17M12,4.5C7,4.5 2.73,7.61 1,12C2.73,16.39 7,19.5 12,19.5C17,19.5 21.27,16.39 23,12C21.27,7.61 17,4.5 12,4.5Z"/></svg><div class="rw" style="top:1042.5px"><span class="l">Dispatch Reactive Power</span><span class="v">0 W</span></div><svg class="ic" style="left:29.75px;top:1112.5px" width="30" height="30" viewBox="0 0 24 24"><path d="M12,9A3,3 0 0,0 9,12A3,3 0 0,0 12,15A3,3 0 0,0 15,12A3,3 0 0,0 12,9M12,17A5,5 0 0,1 7,12A5,5 0 0,1 12,7A5,5 0 0,1 17,12A5,5 0 0,1 12,17M12,4.5C7,4.5 2.73,7.61 1,12C2.73,16.39 7,19.5 12,19.5C17,19.5 21.27,16.39 23,12C21.27,7.61 17,4.5 12,4.5Z"/></svg><div class="rw" style="top:1102.5px"><span class="l">Dispatch Mode</span><span class="v">2</span></div><svg class="ic" style="left:29.75px;top:1172.5px" width="30" height="30" viewBox="0 0 24 24"><path d="M12,9A3,3 0 0,0 9,12A3,3 0 0,0 12,15A3,3 0 0,0 15,12A3,3 0 0,0 12,9M12,17A5,5 0 0,1 7,12A5,5 0 0,1 12,7A5,5 0 0,1 17,12A5,5 0 0,1 12,17M12,4.5C7,4.5 2.73,7.61 1,12C2.73,16.39 7,19.5 12,19.5C17,19.5 21.27,16.39 23,12C21.27,7.61 17,4.5 12,4.5Z"/></svg><div class="rw" style="top:1162.5px"><span class="l">Dispatch SoC</span><span class="v">100%</span></div><svg class="ic" style="left:29.75px;top:1232.5px" width="30" height="30" viewBox="0 0 24 24"><path d="M12,9A3,3 0 0,0 9,12A3,3 0 0,0 12,15A3,3 0 0,0 15,12A3,3 0 0,0 12,9M12,17A5,5 0 0,1 7,12A5,5 0 0,1 12,7A5,5 0 0,1 17,12A5,5 0 0,1 12,17M12,4.5C7,4.5 2.73,7.61 1,12C2.73,16.39 7,19.5 12,19.5C17,19.5 21.27,16.39 23,12C21.27,7.61 17,4.5 12,4.5Z"/></svg><div class="rw" style="top:1222.5px"><span class="l">Dispatch Time</span><span class="v">300 s</span></div>
</div>
<div class="card" style="left:980px;top:10px;height:756px">
<div class="tt">Grid</div>
<svg class="ic" style="left:29.75px;top:94.75px" width="30" height="30" viewBox="0 0 24 24"><path d="M12,9A3,3 0 0,0 9,12A3,3 0 0,0 12,15A3,3 0 0,0 15,12A3,3 0 0,0 12,9M12,17A5,5 0 0,1 7,12A5,5 0 0,1 12,7A5,5 0 0,1 17,12A5,5 0 0,1 12,17M12,4.5C7,4.5 2.73,7.61 1,12C2.73,16.39 7,19.5 12,19.5C17,19.5 21.27,16.39 23,12C21.27,7.61 17,4.5 12,4.5Z"/></svg><div class="rw" style="top:84.75px"><span class="l">CT Rate Grid Meter</span><span class="v">0</span></div><svg class="ic" style="left:29.75px;top:154.75px" width="30" height="30" viewBox="0 0 24 24"><path d="M16.5,21C13.5,21 12.31,16.76 11.05,12.28C10.14,9.04 9,5 7.5,5C4.11,5 4,11.93 4,12H2C2,11.63 2.06,3 7.5,3C10.5,3 11.71,7.25 12.97,11.72C13.83,14.8 15,19 16.5,19C19.94,19 20.03,12.07 20.03,12H22.03C22.03,12.37 21.97,21 16.5,21Z"/></svg><div class="rw" style="top:144.75px"><span class="l">Inverter Grid Frequency</span><span class="v">50 Hz</span></div><svg class="ic" style="left:29.75px;top:214.75px" width="30" height="30" viewBox="0 0 24 24"><path d="M5 3H19A2 2 0 0 1 21 5V19A2 2 0 0 1 19 21H5A2 2 0 0 1 3 19V5A2 2 0 0 1 5 3M5 5V19H19V5Z" fill-rule="evenodd"/><path d="M16.6 6L18 7.4L7.4 18L6 16.6Z"/><circle cx="8.5" cy="8.5" r="1.5"/><circle cx="15.5" cy="15.5" r="1.5"/></svg><div class="lb sl" style="top:204.75px">Max Feed to …</div><div class="tr" style="top:227.25px"></div><div class="ta" style="top:227.25px;width:105px"></div><div class="th" style="top:220.75px;left:329px"></div><div class="vl" style="top:204.75px">100%</div><svg class="ic" style="left:29.75px;top:274.75px" width="30" height="30" viewBox="0 0 24 24"><path d="M12,9A3,3 0 0,0 9,12A3,3 0 0,0 12,15A3,3 0 0,0 15,12A3,3 0 0,0 12,9M12,17A5,5 0 0,1 7,12A5,5 0 0,1 12,7A5,5 0 0,1 17,12A5,5 0 0,1 12,17M12,4.5C7,4.5 2.73,7.61 1,12C2.73,16.39 7,19.5 12,19.5C17,19.5 21.27,16.39 23,12C21.27,7.61 17,4.5 12,4.5Z"/></svg><div class="rw" style="top:264.75px"><span class="l">Max Feed to Grid</span><span class="v">100%</span></div><svg class="ic" style="left:29.75px;top:334.75px" width="30" height="30" viewBox="0 0 24 24"><path d="M7,2V13H10V22L17,10H13L17,2H7Z"/></svg><div class="rw" style="top:324.75px"><span class="l">Power Grid</span><span class="v">-2,115 W</span></div><svg class="ic" style="left:29.75px;top:394.75px" width="30" height="30" viewBox="0 0 24 24"><path d="M7,2V13H10V22L17,10H13L17,2H7Z"/></svg><div class="rw" style="top:384.75px"><span class="l">Power Phase A Grid</span><span class="v">-2,113 W</span></div><svg class="ic" style="left:29.75px;top:454.75px" width="30" height="30" viewBox="0 0 24 24"><path d="M7,2V13H10V22L17,10H13L17,2H7Z"/></svg><div class="rw" style="top:444.75px"><span class="l">Power Phase B Grid</span><span class="v">0 W</span></div><svg class="ic" style="left:29.75px;top:514.75px" width="30" height="30" viewBox="0 0 24 24"><path d="M7,2V13H10V22L17,10H13L17,2H7Z"/></svg><div class="rw" style="top:504.75px"><span class="l">Power Phase C Grid</span><span class="v">0 W</span></div><svg class="ic" style="left:29.75px;top:574.75px" width="30" height="30" viewBox="0 0 24 24"><path d="M16.5,21C13.5,21 12.31,16.76 11.05,12.28C10.14,9.04 9,5 7.5,5C4.11,5 4,11.93 4,12H2C2,11.63 2.06,3 7.5,3C10.5,3 11.71,7.25 12.97,11.72C13.83,14.8 15,19 16.5,19C19.94,19 20.03,12.07 20.03,12H22.03C22.03,12.37 21.97,21 16.5,21Z"/></svg><div class="rw" style="top:564.75px"><span class="l">Voltage Phase A Grid</span><span class="v">238 V</span></div><svg class="ic" style="left:29.75px;top:634.75px" width="30" height="30" viewBox="0 0 24 24"><path d="M16.5,21C13.5,21 12.31,16.76 11.05,12.28C10.14,9.04 9,5 7.5,5C4.11,5 4,11.93 4,12H2C2,11.63 2.06,3 7.5,3C10.5,3 11.71,7.25 12.97,11.72C13.83,14.8 15,19 16.5,19C19.94,19 20.03,12.07 20.03,12H22.03C22.03,12.37 21.97,21 16.5,21Z"/></svg><div class="rw" style="top:624.75px"><span class="l">Voltage Phase B Grid</span><span class="v">0 V</span></div><svg class="ic" style="left:29.75px;top:694.75px" width="30" height="30" viewBox="0 0 24 24"><path d="M16.5,21C13.5,21 12.31,16.76 11.05,12.28C10.14,9.04 9,5 7.5,5C4.11,5 4,11.93 4,12H2C2,11.63 2.06,3 7.5,3C10.5,3 11.71,7.25 12.97,11.72C13.83,14.8 15,19 16.5,19C19.94,19 20.03,12.07 20.03,12H22.03C22.03,12.37 21.97,21 16.5,21Z"/></svg><div class="rw" style="top:684.75px"><span class="l">Voltage Phase C Grid</span><span class="v">0 V</span></div>
</div>
<div class="card" style="left:980px;top:777px;height:816px">
<div class="tt">Battery</div>
<svg class="ic" style="left:29.75px;top:94.75px" width="30" height="30" viewBox="0 0 24 24"><path fill-rule="evenodd" d="M16,10H8V6H16ZM16.67,4H15V2H9V4H7.33A1.33,1.33 0 0,0 6,5.33V20.67C6,21.4 6.6,22 7.33,22H16.67A1.33,1.33 0 0,0 18,20.67V5.33C18,4.6 17.4,4 16.67,4Z"/></svg><div class="rw" style="top:84.75px"><span class="l">SoC Battery</span><span class="v">74.8%</span></div><svg class="ic" style="left:29.75px;top:154.75px" width="30" height="30" viewBox="0 0 24 24"><path d="M7,2V13H10V22L17,10H13L17,2H7Z"/></svg><div class="rw" style="top:144.75px"><span class="l">Battery Power</span><span class="v">0 W</span></div><svg class="ic" style="left:29.75px;top:214.75px" width="30" height="30" viewBox="0 0 24 24"><path d="M16.5,21C13.5,21 12.31,16.76 11.05,12.28C10.14,9.04 9,5 7.5,5C4.11,5 4,11.93 4,12H2C2,11.63 2.06,3 7.5,3C10.5,3 11.71,7.25 12.97,11.72C13.83,14.8 15,19 16.5,19C19.94,19 20.03,12.07 20.03,12H22.03C22.03,12.37 21.97,21 16.5,21Z"/></svg><div class="rw" style="top:204.75px"><span class="l">Battery Voltage</span><span class="v">100 V</span></div><svg class="ic" style="left:29.75px;top:274.75px" width="30" height="30" viewBox="0 0 24 24"><path d="M2.5 12H21.5M2.5 12C4 8.6 6 8.2 7.5 8.2S11 9.5 12 12S15 15.8 16.5 15.8S20.5 15 21.5 12" fill="none" stroke="currentColor" stroke-width="1.9"/></svg><div class="rw" style="top:264.75px"><span class="l">Battery Current</span><span class="v">0.00 A</span></div><svg class="ic" style="left:29.75px;top:334.75px" width="30" height="30" viewBox="0 0 24 24"><path d="M16.67,4H15V2H9V4H7.33A1.33,1.33 0 0,0 6,5.33V20.67C6,21.4 6.6,22 7.33,22H16.67A1.33,1.33 0 0,0 18,20.67V5.33C18,4.6 17.4,4 16.67,4Z"/></svg><div class="rw" style="top:324.75px"><span class="l">SoH Battery</span><span class="v">100%</span></div><svg class="ic" style="left:29.75px;top:394.75px" width="30" height="30" viewBox="0 0 24 24"><path d="M16.5 11L13 7.5L14.4 6.1L16.5 8.2L20.7 4L22.1 5.4L16.5 11M11 7H2V9H11V7M21 13.4L19.6 12L17 14.6L14.4 12L13 13.4L15.6 16L13 18.6L14.4 20L17 17.4L19.6 20L21 18.6L18.4 16L21 13.4M11 15H2V17H11V15Z"/></svg><div class="rw" style="top:384.75px"><span class="l">Battery Status</span><span class="v">257</span></div><svg class="ic" style="left:29.75px;top:454.75px" width="30" height="30" viewBox="0 0 24 24"><path d="M16.67,4H15V2H9V4H7.33A1.33,1.33 0 0,0 6,5.33V20.67C6,21.4 6.6,22 7.33,22H16.67A1.33,1.33 0 0,0 18,20.67V5.33C18,4.6 17.4,4 16.67,4Z"/></svg><div class="rw" style="top:444.75px"><span class="l">Battery Full</span><span class="v">False</span></div><svg class="ic" style="left:29.75px;top:514.75px" width="30" height="30" viewBox="0 0 24 24"><path d="M15 13V5A3 3 0 0 0 9 5V13A5 5 0 1 0 15 13M12 4A1 1 0 0 1 13 5V8H11V5A1 1 0 0 1 12 4Z" fill-rule="evenodd"/></svg><div class="rw" style="top:504.75px"><span class="l">Battery Min Cell Temp</span><span class="v">24.0 °C</span></div><svg class="ic" style="left:29.75px;top:574.75px" width="30" height="30" viewBox="0 0 24 24"><path d="M15 13V5A3 3 0 0 0 9 5V13A5 5 0 1 0 15 13M12 4A1 1 0 0 1 13 5V8H11V5A1 1 0 0 1 12 4Z" fill-rule="evenodd"/></svg><div class="rw" style="top:564.75px"><span class="l">Battery Max Cell Temp</span><span class="v">26.0 °C</span></div><svg class="ic" style="left:29.75px;top:634.75px" width="30" height="30" viewBox="0 0 24 24"><path d="M2.5 12H21.5M2.5 12C4 8.6 6 8.2 7.5 8.2S11 9.5 12 12S15 15.8 16.5 15.8S20.5 15 21.5 12" fill="none" stroke="currentColor" stroke-width="1.9"/></svg><div class="rw" style="top:624.75px"><span class="l">Battery Max Charge Current</span><span class="v">79.20 A</span></div><svg class="ic" style="left:29.75px;top:694.75px" width="30" height="30" viewBox="0 0 24 24"><path d="M2.5 12H21.5M2.5 12C4 8.6 6 8.2 7.5 8.2S11 9.5 12 12S15 15.8 16.5 15.8S20.5 15 21.5 12" fill="none" stroke="currentColor" stroke-width="1.9"/></svg><div class="rw" style="top:684.75px"><span class="l">Battery Max Discharge Current</span><span class="v">79.20 A</span></div><svg class="ic" style="left:29.75px;top:754.75px" width="30" height="30" viewBox="0 0 24 24"><path d="M12,9A3,3 0 0,0 9,12A3,3 0 0,0 12,15A3,3 0 0,0 15,12A3,3 0 0,0 12,9M12,17A5,5 0 0,1 7,12A5,5 0 0,1 12,7A5,5 0 0,1 17,12A5,5 0 0,1 12,17M12,4.5C7,4.5 2.73,7.61 1,12C2.73,16.39 7,19.5 12,19.5C17,19.5 21.27,16.39 23,12C21.27,7.61 17,4.5 12,4.5Z"/></svg><div class="rw" style="top:744.75px"><span class="l">Battery Remaining Time</span><span class="v">0 min</span></div>
</div>
<div class="card" style="left:980px;top:1604px;height:516px">
<div class="tt">Today</div>
<svg class="ic" style="left:29.75px;top:94.75px" width="30" height="30" viewBox="0 0 24 24"><g fill="none" stroke="currentColor"><rect x="2.9" y="4.9" width="18.2" height="14.2" rx="1.6" stroke-width="1.7"/><path d="M12 5V19" stroke-width="1.5"/><path d="M6.6 9.6L8.4 8.6V16.2" stroke-width="1.5"/><path d="M14.5 8.2Q14.8 6.8 16.3 6.8Q17.9 6.9 17.9 8.2Q17.9 9.1 16.5 10.4L14.5 12.1H18.2" stroke-width="1.25"/><path d="M14.5 14.1Q14.9 13.1 16.3 13.1Q17.9 13.1 17.9 14.4Q17.9 15.5 16.2 15.6Q18.1 15.7 18.1 17.1Q18 18.4 16.3 18.4Q14.9 18.4 14.5 17.4" stroke-width="1.25"/></g></svg><div class="rw" style="top:84.75px"><span class="l">Today&#x27;s Energy from PV</span><span class="v">10.70 kWh</span></div><svg class="ic" style="left:29.75px;top:154.75px" width="30" height="30" viewBox="0 0 24 24"><g fill="none" stroke="currentColor"><rect x="2.9" y="4.9" width="18.2" height="14.2" rx="1.6" stroke-width="1.7"/><path d="M12 5V19" stroke-width="1.5"/><path d="M6.6 9.6L8.4 8.6V16.2" stroke-width="1.5"/><path d="M14.5 8.2Q14.8 6.8 16.3 6.8Q17.9 6.9 17.9 8.2Q17.9 9.1 16.5 10.4L14.5 12.1H18.2" stroke-width="1.25"/><path d="M14.5 14.1Q14.9 13.1 16.3 13.1Q17.9 13.1 17.9 14.4Q17.9 15.5 16.2 15.6Q18.1 15.7 18.1 17.1Q18 18.4 16.3 18.4Q14.9 18.4 14.5 17.4" stroke-width="1.25"/></g></svg><div class="rw" style="top:144.75px"><span class="l">Today&#x27;s Energy Consumpti…</span><span class="v">20.64 kWh</span></div><svg class="ic" style="left:29.75px;top:214.75px" width="30" height="30" viewBox="0 0 24 24"><g fill="none" stroke="currentColor"><rect x="2.9" y="4.9" width="18.2" height="14.2" rx="1.6" stroke-width="1.7"/><path d="M12 5V19" stroke-width="1.5"/><path d="M6.6 9.6L8.4 8.6V16.2" stroke-width="1.5"/><path d="M14.5 8.2Q14.8 6.8 16.3 6.8Q17.9 6.9 17.9 8.2Q17.9 9.1 16.5 10.4L14.5 12.1H18.2" stroke-width="1.25"/><path d="M14.5 14.1Q14.9 13.1 16.3 13.1Q17.9 13.1 17.9 14.4Q17.9 15.5 16.2 15.6Q18.1 15.7 18.1 17.1Q18 18.4 16.3 18.4Q14.9 18.4 14.5 17.4" stroke-width="1.25"/></g></svg><div class="rw" style="top:204.75px"><span class="l">Today&#x27;s Energy Feed to Gri…</span><span class="v">11.99 kWh</span></div><svg class="ic" style="left:29.75px;top:274.75px" width="30" height="30" viewBox="0 0 24 24"><g fill="none" stroke="currentColor"><rect x="2.9" y="4.9" width="18.2" height="14.2" rx="1.6" stroke-width="1.7"/><path d="M12 5V19" stroke-width="1.5"/><path d="M6.6 9.6L8.4 8.6V16.2" stroke-width="1.5"/><path d="M14.5 8.2Q14.8 6.8 16.3 6.8Q17.9 6.9 17.9 8.2Q17.9 9.1 16.5 10.4L14.5 12.1H18.2" stroke-width="1.25"/><path d="M14.5 14.1Q14.9 13.1 16.3 13.1Q17.9 13.1 17.9 14.4Q17.9 15.5 16.2 15.6Q18.1 15.7 18.1 17.1Q18 18.4 16.3 18.4Q14.9 18.4 14.5 17.4" stroke-width="1.25"/></g></svg><div class="rw" style="top:264.75px"><span class="l">Today&#x27;s Energy Charge Batt…</span><span class="v">18.10 kWh</span></div><svg class="ic" style="left:29.75px;top:334.75px" width="30" height="30" viewBox="0 0 24 24"><g fill="none" stroke="currentColor"><rect x="2.9" y="4.9" width="18.2" height="14.2" rx="1.6" stroke-width="1.7"/><path d="M12 5V19" stroke-width="1.5"/><path d="M6.6 9.6L8.4 8.6V16.2" stroke-width="1.5"/><path d="M14.5 8.2Q14.8 6.8 16.3 6.8Q17.9 6.9 17.9 8.2Q17.9 9.1 16.5 10.4L14.5 12.1H18.2" stroke-width="1.25"/><path d="M14.5 14.1Q14.9 13.1 16.3 13.1Q17.9 13.1 17.9 14.4Q17.9 15.5 16.2 15.6Q18.1 15.7 18.1 17.1Q18 18.4 16.3 18.4Q14.9 18.4 14.5 17.4" stroke-width="1.25"/></g></svg><div class="rw" style="top:324.75px"><span class="l">Today&#x27;s Energy Discharge Ba…</span><span class="v">9.20 kWh</span></div><svg class="ic" style="left:29.75px;top:394.75px" width="30" height="30" viewBox="0 0 24 24"><path d="M11 15H6L13 1V9H18L11 23V15Z"/></svg><div class="rw" style="top:384.75px"><span class="l">Today&#x27;s House Load</span><span class="v">10.45 kWh</span></div><svg class="ic" style="left:29.75px;top:454.75px" width="30" height="30" viewBox="0 0 24 24"><g fill="none" stroke="currentColor"><rect x="2.9" y="4.9" width="18.2" height="14.2" rx="1.6" stroke-width="1.7"/><path d="M12 5V19" stroke-width="1.5"/><path d="M6.6 9.6L8.4 8.6V16.2" stroke-width="1.5"/><path d="M14.5 8.2Q14.8 6.8 16.3 6.8Q17.9 6.9 17.9 8.2Q17.9 9.1 16.5 10.4L14.5 12.1H18.2" stroke-width="1.25"/><path d="M14.5 14.1Q14.9 13.1 16.3 13.1Q17.9 13.1 17.9 14.4Q17.9 15.5 16.2 15.6Q18.1 15.7 18.1 17.1Q18 18.4 16.3 18.4Q14.9 18.4 14.5 17.4" stroke-width="1.25"/></g></svg><div class="rw" style="top:444.75px"><span class="l">Today&#x27;s Energy from PV (Meter)</span><span class="v">0 Wh</span></div>
</div>
<div class="card" style="left:980px;top:2131px;height:636px">
<div class="tt">Total</div>
<svg class="ic" style="left:29.75px;top:94.75px" width="30" height="30" viewBox="0 0 24 24"><path d="M11 15H6L13 1V9H18L11 23V15Z"/></svg><div class="rw" style="top:84.75px"><span class="l">Total Energy from PV</span><span class="v">2,481.80 kWh</span></div><svg class="ic" style="left:29.75px;top:154.75px" width="30" height="30" viewBox="0 0 24 24"><path d="M11 15H6L13 1V9H18L11 23V15Z"/></svg><div class="rw" style="top:144.75px"><span class="l">Total Energy Consumpti…</span><span class="v">4,878.11 kWh</span></div><svg class="ic" style="left:29.75px;top:214.75px" width="30" height="30" viewBox="0 0 24 24"><path d="M11 15H6L13 1V9H18L11 23V15Z"/></svg><div class="rw" style="top:204.75px"><span class="l">Total Energy Feed to Gri…</span><span class="v">7,251.05 kWh</span></div><svg class="ic" style="left:29.75px;top:274.75px" width="30" height="30" viewBox="0 0 24 24"><path d="M11 15H6L13 1V9H18L11 23V15Z"/></svg><div class="rw" style="top:264.75px"><span class="l">Total Energy Charge Bat…</span><span class="v">5,377.40 kWh</span></div><svg class="ic" style="left:29.75px;top:334.75px" width="30" height="30" viewBox="0 0 24 24"><path d="M11 15H6L13 1V9H18L11 23V15Z"/></svg><div class="rw" style="top:324.75px"><span class="l">Total Energy Charge Bat…</span><span class="v">4,118.60 kWh</span></div><svg class="ic" style="left:29.75px;top:394.75px" width="30" height="30" viewBox="0 0 24 24"><path d="M11 15H6L13 1V9H18L11 23V15Z"/></svg><div class="rw" style="top:384.75px"><span class="l">Total Energy Discharge …</span><span class="v">5,156.20 kWh</span></div><svg class="ic" style="left:29.75px;top:454.75px" width="30" height="30" viewBox="0 0 24 24"><path d="M12,9A3,3 0 0,0 9,12A3,3 0 0,0 12,15A3,3 0 0,0 15,12A3,3 0 0,0 12,9M12,17A5,5 0 0,1 7,12A5,5 0 0,1 12,7A5,5 0 0,1 17,12A5,5 0 0,1 12,17M12,4.5C7,4.5 2.73,7.61 1,12C2.73,16.39 7,19.5 12,19.5C17,19.5 21.27,16.39 23,12C21.27,7.61 17,4.5 12,4.5Z"/></svg><div class="rw" style="top:444.75px"><span class="l">Total House Load</span><span class="v">108.86 kWh</span></div><svg class="ic" style="left:29.75px;top:514.75px" width="30" height="30" viewBox="0 0 24 24"><path d="M11 15H6L13 1V9H18L11 23V15Z"/></svg><div class="rw" style="top:504.75px"><span class="l">Total Energy Feed to Grid (PV)</span><span class="v">0.00 kWh</span></div><svg class="ic" style="left:29.75px;top:574.75px" width="30" height="30" viewBox="0 0 24 24"><path d="M11 15H6L13 1V9H18L11 23V15Z"/></svg><div class="rw" style="top:564.75px"><span class="l">Total Energy from PV (Met…</span><span class="v">39.329 Wh</span></div>
</div>
<div class="card" style="left:1450px;top:10px;height:1487.25px">
<div class="tt">Other</div>
<svg class="ic" style="left:29.75px;top:94.75px" width="30" height="30" viewBox="0 0 24 24"><path d="M12,9A3,3 0 0,0 9,12A3,3 0 0,0 12,15A3,3 0 0,0 15,12A3,3 0 0,0 12,9M12,17A5,5 0 0,1 7,12A5,5 0 0,1 12,7A5,5 0 0,1 17,12A5,5 0 0,1 12,17M12,4.5C7,4.5 2.73,7.61 1,12C2.73,16.39 7,19.5 12,19.5C17,19.5 21.27,16.39 23,12C21.27,7.61 17,4.5 12,4.5Z"/></svg><div class="rw" style="top:84.75px"><span class="l">PV Capacity Storage</span><span class="v">10,600 W</span></div><svg class="ic" style="left:29.75px;top:154.75px" width="30" height="30" viewBox="0 0 24 24"><path d="M12,9A3,3 0 0,0 9,12A3,3 0 0,0 12,15A3,3 0 0,0 15,12A3,3 0 0,0 12,9M12,17A5,5 0 0,1 7,12A5,5 0 0,1 12,7A5,5 0 0,1 17,12A5,5 0 0,1 12,17M12,4.5C7,4.5 2.73,7.61 1,12C2.73,16.39 7,19.5 12,19.5C17,19.5 21.27,16.39 23,12C21.27,7.61 17,4.5 12,4.5Z"/></svg><div class="rw" style="top:144.75px"><span class="l">PV Capacity of Grid Inverter</span><span class="v">0 W</span></div><svg class="ic" style="left:29.75px;top:214.75px" width="30" height="30" viewBox="0 0 24 24"><path d="M12,9A3,3 0 0,0 9,12A3,3 0 0,0 12,15A3,3 0 0,0 15,12A3,3 0 0,0 12,9M12,17A5,5 0 0,1 7,12A5,5 0 0,1 12,7A5,5 0 0,1 17,12A5,5 0 0,1 12,17M12,4.5C7,4.5 2.73,7.61 1,12C2.73,16.39 7,19.5 12,19.5C17,19.5 21.27,16.39 23,12C21.27,7.61 17,4.5 12,4.5Z"/></svg><div class="rw" style="top:204.75px"><span class="l">CT Rate PV (Meter)</span><span class="v">0</span></div><svg class="ic" style="left:29.75px;top:274.75px" width="30" height="30" viewBox="0 0 24 24"><path d="M15 13V5A3 3 0 0 0 9 5V13A5 5 0 1 0 15 13M12 4A1 1 0 0 1 13 5V8H11V5A1 1 0 0 1 12 4Z" fill-rule="evenodd"/></svg><div class="rw" style="top:264.75px"><span class="l">Inverter Temperature</span><span class="v">56.0 °C</span></div><svg class="ic" style="left:29.75px;top:334.75px" width="30" height="30" viewBox="0 0 24 24"><path d="M7,2V13H10V22L17,10H13L17,2H7Z"/></svg><div class="rw" style="top:324.75px"><span class="l">Power Inverter</span><span class="v">2,649 W</span></div><svg class="ic" style="left:29.75px;top:394.75px" width="30" height="30" viewBox="0 0 24 24"><path d="M7,2V13H10V22L17,10H13L17,2H7Z"/></svg><div class="rw" style="top:384.75px"><span class="l">Power Inverter L1</span><span class="v">2,646 W</span></div><svg class="ic" style="left:29.75px;top:454.75px" width="30" height="30" viewBox="0 0 24 24"><path d="M7,2V13H10V22L17,10H13L17,2H7Z"/></svg><div class="rw" style="top:444.75px"><span class="l">Power Inverter L2</span><span class="v">0 W</span></div><svg class="ic" style="left:29.75px;top:514.75px" width="30" height="30" viewBox="0 0 24 24"><path d="M7,2V13H10V22L17,10H13L17,2H7Z"/></svg><div class="rw" style="top:504.75px"><span class="l">Power Inverter L3</span><span class="v">0 W</span></div><svg class="ic" style="left:29.75px;top:574.75px" width="30" height="30" viewBox="0 0 24 24"><path d="M7,2V13H10V22L17,10H13L17,2H7Z"/></svg><div class="rw" style="top:564.75px"><span class="l">Backup Power Inverter</span><span class="v">0 W</span></div><svg class="ic" style="left:29.75px;top:634.75px" width="30" height="30" viewBox="0 0 24 24"><path d="M7,2V13H10V22L17,10H13L17,2H7Z"/></svg><div class="rw" style="top:624.75px"><span class="l">Backup Power Inverter L1</span><span class="v">0 W</span></div><svg class="ic" style="left:29.75px;top:694.75px" width="30" height="30" viewBox="0 0 24 24"><path d="M7,2V13H10V22L17,10H13L17,2H7Z"/></svg><div class="rw" style="top:684.75px"><span class="l">Backup Power Inverter L2</span><span class="v">0 W</span></div><svg class="ic" style="left:29.75px;top:754.75px" width="30" height="30" viewBox="0 0 24 24"><path d="M7,2V13H10V22L17,10H13L17,2H7Z"/></svg><div class="rw" style="top:744.75px"><span class="l">Backup Power Inverter L3</span><span class="v">0 W</span></div><svg class="ic" style="left:29.75px;top:814.75px" width="30" height="30" viewBox="0 0 24 24"><path d="M12,9A3,3 0 0,0 9,12A3,3 0 0,0 12,15A3,3 0 0,0 15,12A3,3 0 0,0 12,9M12,17A5,5 0 0,1 7,12A5,5 0 0,1 12,7A5,5 0 0,1 17,12A5,5 0 0,1 12,17M12,4.5C7,4.5 2.73,7.61 1,12C2.73,16.39 7,19.5 12,19.5C17,19.5 21.27,16.39 23,12C21.27,7.61 17,4.5 12,4.5Z"/></svg><div class="rw" style="top:804.75px"><span class="l">Current House Load</span><span class="v">534 W</span></div><div class="dv" style="top:864.75px"></div><svg class="ic" style="left:29.75px;top:886px" width="30" height="30" viewBox="0 0 24 24"><path d="M12,9A3,3 0 0,0 9,12A3,3 0 0,0 12,15A3,3 0 0,0 15,12A3,3 0 0,0 12,9M12,17A5,5 0 0,1 7,12A5,5 0 0,1 12,7A5,5 0 0,1 17,12A5,5 0 0,1 12,17M12,4.5C7,4.5 2.73,7.61 1,12C2.73,16.39 7,19.5 12,19.5C17,19.5 21.27,16.39 23,12C21.27,7.61 17,4.5 12,4.5Z"/></svg><div class="rw" style="top:876px"><span class="l">Inverter Work Mode</span><span class="v">1</span></div><svg class="ic" style="left:29.75px;top:946px" width="30" height="30" viewBox="0 0 24 24"><path d="M12,9A3,3 0 0,0 9,12A3,3 0 0,0 12,15A3,3 0 0,0 15,12A3,3 0 0,0 12,9M12,17A5,5 0 0,1 7,12A5,5 0 0,1 12,7A5,5 0 0,1 17,12A5,5 0 0,1 12,17M12,4.5C7,4.5 2.73,7.61 1,12C2.73,16.39 7,19.5 12,19.5C17,19.5 21.27,16.39 23,12C21.27,7.61 17,4.5 12,4.5Z"/></svg><div class="rw" style="top:936px"><span class="l">System Date</span><span class="v">19/09/2025</span></div><svg class="ic" style="left:29.75px;top:1006px" width="30" height="30" viewBox="0 0 24 24"><path d="M12,9A3,3 0 0,0 9,12A3,3 0 0,0 12,15A3,3 0 0,0 15,12A3,3 0 0,0 12,9M12,17A5,5 0 0,1 7,12A5,5 0 0,1 12,7A5,5 0 0,1 17,12A5,5 0 0,1 12,17M12,4.5C7,4.5 2.73,7.61 1,12C2.73,16.39 7,19.5 12,19.5C17,19.5 21.27,16.39 23,12C21.27,7.61 17,4.5 12,4.5Z"/></svg><div class="rw" style="top:996px"><span class="l">System Time</span><span class="v">14:35:16</span></div><svg class="ic" style="left:29.75px;top:1066px" width="30" height="30" viewBox="0 0 24 24"><path d="M12,9A3,3 0 0,0 9,12A3,3 0 0,0 12,15A3,3 0 0,0 15,12A3,3 0 0,0 12,9M12,17A5,5 0 0,1 7,12A5,5 0 0,1 12,7A5,5 0 0,1 17,12A5,5 0 0,1 12,17M12,4.5C7,4.5 2.73,7.61 1,12C2.73,16.39 7,19.5 12,19.5C17,19.5 21.27,16.39 23,12C21.27,7.61 17,4.5 12,4.5Z"/></svg><div class="rw" style="top:1056px"><span class="l">Modbus Baud Rate</span><span class="v">0</span></div><svg class="ic" style="left:29.75px;top:1126px" width="30" height="30" viewBox="0 0 24 24"><path d="M12,9A3,3 0 0,0 9,12A3,3 0 0,0 12,15A3,3 0 0,0 15,12A3,3 0 0,0 12,9M12,17A5,5 0 0,1 7,12A5,5 0 0,1 12,7A5,5 0 0,1 17,12A5,5 0 0,1 12,17M12,4.5C7,4.5 2.73,7.61 1,12C2.73,16.39 7,19.5 12,19.5C17,19.5 21.27,16.39 23,12C21.27,7.61 17,4.5 12,4.5Z"/></svg><div class="rw" style="top:1116px"><span class="l">BMS Version</span><span class="v">V1.65</span></div><svg class="ic" style="left:29.75px;top:1186px" width="30" height="30" viewBox="0 0 24 24"><path d="M12,9A3,3 0 0,0 9,12A3,3 0 0,0 12,15A3,3 0 0,0 15,12A3,3 0 0,0 12,9M12,17A5,5 0 0,1 7,12A5,5 0 0,1 12,7A5,5 0 0,1 17,12A5,5 0 0,1 12,17M12,4.5C7,4.5 2.73,7.61 1,12C2.73,16.39 7,19.5 12,19.5C17,19.5 21.27,16.39 23,12C21.27,7.61 17,4.5 12,4.5Z"/></svg><div class="rw" style="top:1176px"><span class="l">EMS Version</span><span class="v">V0.11.586</span></div><svg class="ic" style="left:29.75px;top:1246px" width="30" height="30" viewBox="0 0 24 24"><path d="M12,9A3,3 0 0,0 9,12A3,3 0 0,0 12,15A3,3 0 0,0 15,12A3,3 0 0,0 12,9M12,17A5,5 0 0,1 7,12A5,5 0 0,1 12,7A5,5 0 0,1 17,12A5,5 0 0,1 12,17M12,4.5C7,4.5 2.73,7.61 1,12C2.73,16.39 7,19.5 12,19.5C17,19.5 21.27,16.39 23,12C21.27,7.61 17,4.5 12,4.5Z"/></svg><div class="rw" style="top:1236px"><span class="l">LMU Version</span><span class="v">0</span></div><svg class="ic" style="left:29.75px;top:1306px" width="30" height="30" viewBox="0 0 24 24"><path d="M12,9A3,3 0 0,0 9,12A3,3 0 0,0 12,15A3,3 0 0,0 15,12A3,3 0 0,0 12,9M12,17A5,5 0 0,1 7,12A5,5 0 0,1 12,7A5,5 0 0,1 17,12A5,5 0 0,1 12,17M12,4.5C7,4.5 2.73,7.61 1,12C2.73,16.39 7,19.5 12,19.5C17,19.5 21.27,16.39 23,12C21.27,7.61 17,4.5 12,4.5Z"/></svg><div class="rw" style="top:1296px"><span class="l">ISO Version</span><span class="v">0</span></div><svg class="ic" style="left:29.75px;top:1366px" width="30" height="30" viewBox="0 0 24 24"><path d="M12,9A3,3 0 0,0 9,12A3,3 0 0,0 12,15A3,3 0 0,0 15,12A3,3 0 0,0 12,9M12,17A5,5 0 0,1 7,12A5,5 0 0,1 12,7A5,5 0 0,1 17,12A5,5 0 0,1 12,17M12,4.5C7,4.5 2.73,7.61 1,12C2.73,16.39 7,19.5 12,19.5C17,19.5 21.27,16.39 23,12C21.27,7.61 17,4.5 12,4.5Z"/></svg><div class="rw" style="top:1356px"><span class="l">Inverter Version</span><span class="v">01000.21M</span></div><svg class="ic" style="left:29.75px;top:1426px" width="30" height="30" viewBox="0 0 24 24"><path d="M12,9A3,3 0 0,0 9,12A3,3 0 0,0 12,15A3,3 0 0,0 15,12A3,3 0 0,0 12,9M12,17A5,5 0 0,1 7,12A5,5 0 0,1 12,7A5,5 0 0,1 17,12A5,5 0 0,1 12,17M12,4.5C7,4.5 2.73,7.61 1,12C2.73,16.39 7,19.5 12,19.5C17,19.5 21.27,16.39 23,12C21.27,7.61 17,4.5 12,4.5Z"/></svg><div class="rw" style="top:1416px"><span class="l">Inverter ARM Version</span><span class="v"></span></div>
</div>
<div class="card" style="left:1450px;top:1508px;height:1761px">
<div class="tt">Grid Safety</div>
<svg class="ic" style="left:29.75px;top:94.75px" width="30" height="30" viewBox="0 0 24 24"><path d="M12,9A3,3 0 0,0 9,12A3,3 0 0,0 12,15A3,3 0 0,0 15,12A3,3 0 0,0 12,9M12,17A5,5 0 0,1 7,12A5,5 0 0,1 12,7A5,5 0 0,1 17,12A5,5 0 0,1 12,17M12,4.5C7,4.5 2.73,7.61 1,12C2.73,16.39 7,19.5 12,19.5C17,19.5 21.27,16.39 23,12C21.27,7.61 17,4.5 12,4.5Z"/></svg><div class="rw" style="top:84.75px"><span class="l">Grid Regulation</span><span class="v">40</span></div><div class="dv" style="top:144.75px"></div><svg class="ic" style="left:29.75px;top:166px" width="30" height="30" viewBox="0 0 24 24"><path d="M16.5,21C13.5,21 12.31,16.76 11.05,12.28C10.14,9.04 9,5 7.5,5C4.11,5 4,11.93 4,12H2C2,11.63 2.06,3 7.5,3C10.5,3 11.71,7.25 12.97,11.72C13.83,14.8 15,19 16.5,19C19.94,19 20.03,12.07 20.03,12H22.03C22.03,12.37 21.97,21 16.5,21Z"/></svg><div class="rw" style="top:156px"><span class="l">Overvoltage Protection L1</span><span class="v">269 V</span></div><svg class="ic" style="left:29.75px;top:226px" width="30" height="30" viewBox="0 0 24 24"><path d="M12,9A3,3 0 0,0 9,12A3,3 0 0,0 12,15A3,3 0 0,0 15,12A3,3 0 0,0 12,9M12,17A5,5 0 0,1 7,12A5,5 0 0,1 12,7A5,5 0 0,1 17,12A5,5 0 0,1 12,17M12,4.5C7,4.5 2.73,7.61 1,12C2.73,16.39 7,19.5 12,19.5C17,19.5 21.27,16.39 23,12C21.27,7.61 17,4.5 12,4.5Z"/></svg><div class="rw" style="top:216px"><span class="l">OvP L1 Time</span><span class="v">700 ms</span></div><svg class="ic" style="left:29.75px;top:286px" width="30" height="30" viewBox="0 0 24 24"><path d="M16.5,21C13.5,21 12.31,16.76 11.05,12.28C10.14,9.04 9,5 7.5,5C4.11,5 4,11.93 4,12H2C2,11.63 2.06,3 7.5,3C10.5,3 11.71,7.25 12.97,11.72C13.83,14.8 15,19 16.5,19C19.94,19 20.03,12.07 20.03,12H22.03C22.03,12.37 21.97,21 16.5,21Z"/></svg><div class="rw" style="top:276px"><span class="l">OvP L2</span><span class="v">281 V</span></div><svg class="ic" style="left:29.75px;top:346px" width="30" height="30" viewBox="0 0 24 24"><path d="M12,9A3,3 0 0,0 9,12A3,3 0 0,0 12,15A3,3 0 0,0 15,12A3,3 0 0,0 12,9M12,17A5,5 0 0,1 7,12A5,5 0 0,1 12,7A5,5 0 0,1 17,12A5,5 0 0,1 12,17M12,4.5C7,4.5 2.73,7.61 1,12C2.73,16.39 7,19.5 12,19.5C17,19.5 21.27,16.39 23,12C21.27,7.61 17,4.5 12,4.5Z"/></svg><div class="rw" style="top:336px"><span class="l">OvP L2 Time</span><span class="v">6 ms</span></div><svg class="ic" style="left:29.75px;top:406px" width="30" height="30" viewBox="0 0 24 24"><path d="M16.5,21C13.5,21 12.31,16.76 11.05,12.28C10.14,9.04 9,5 7.5,5C4.11,5 4,11.93 4,12H2C2,11.63 2.06,3 7.5,3C10.5,3 11.71,7.25 12.97,11.72C13.83,14.8 15,19 16.5,19C19.94,19 20.03,12.07 20.03,12H22.03C22.03,12.37 21.97,21 16.5,21Z"/></svg><div class="rw" style="top:396px"><span class="l">OvP L3</span><span class="v">281 V</span></div><svg class="ic" style="left:29.75px;top:466px" width="30" height="30" viewBox="0 0 24 24"><path d="M12,9A3,3 0 0,0 9,12A3,3 0 0,0 12,15A3,3 0 0,0 15,12A3,3 0 0,0 12,9M12,17A5,5 0 0,1 7,12A5,5 0 0,1 12,7A5,5 0 0,1 17,12A5,5 0 0,1 12,17M12,4.5C7,4.5 2.73,7.61 1,12C2.73,16.39 7,19.5 12,19.5C17,19.5 21.27,16.39 23,12C21.27,7.61 17,4.5 12,4.5Z"/></svg><div class="rw" style="top:456px"><span class="l">OvP L3 Time</span><span class="v">6 ms</span></div><svg class="ic" style="left:29.75px;top:526px" width="30" height="30" viewBox="0 0 24 24"><path d="M16.5,21C13.5,21 12.31,16.76 11.05,12.28C10.14,9.04 9,5 7.5,5C4.11,5 4,11.93 4,12H2C2,11.63 2.06,3 7.5,3C10.5,3 11.71,7.25 12.97,11.72C13.83,14.8 15,19 16.5,19C19.94,19 20.03,12.07 20.03,12H22.03C22.03,12.37 21.97,21 16.5,21Z"/></svg><div class="rw" style="top:516px"><span class="l">OvP10</span><span class="v">269 V</span></div><svg class="ic" style="left:29.75px;top:586px" width="30" height="30" viewBox="0 0 24 24"><path d="M12,9A3,3 0 0,0 9,12A3,3 0 0,0 12,15A3,3 0 0,0 15,12A3,3 0 0,0 12,9M12,17A5,5 0 0,1 7,12A5,5 0 0,1 12,7A5,5 0 0,1 17,12A5,5 0 0,1 12,17M12,4.5C7,4.5 2.73,7.61 1,12C2.73,16.39 7,19.5 12,19.5C17,19.5 21.27,16.39 23,12C21.27,7.61 17,4.5 12,4.5Z"/></svg><div class="rw" style="top:576px"><span class="l">OvP10 Time</span><span class="v">10,000 ms</span></div><div class="dv" style="top:636px"></div><svg class="ic" style="left:29.75px;top:657.25px" width="30" height="30" viewBox="0 0 24 24"><path d="M16.5,21C13.5,21 12.31,16.76 11.05,12.28C10.14,9.04 9,5 7.5,5C4.11,5 4,11.93 4,12H2C2,11.63 2.06,3 7.5,3C10.5,3 11.71,7.25 12.97,11.72C13.83,14.8 15,19 16.5,19C19.94,19 20.03,12.07 20.03,12H22.03C22.03,12.37 21.97,21 16.5,21Z"/></svg><div class="rw" style="top:647.25px"><span class="l">Undervoltage Protection L1</span><span class="v">191 V</span></div><svg class="ic" style="left:29.75px;top:717.25px" width="30" height="30" viewBox="0 0 24 24"><path d="M12,9A3,3 0 0,0 9,12A3,3 0 0,0 12,15A3,3 0 0,0 15,12A3,3 0 0,0 12,9M12,17A5,5 0 0,1 7,12A5,5 0 0,1 12,7A5,5 0 0,1 17,12A5,5 0 0,1 12,17M12,4.5C7,4.5 2.73,7.61 1,12C2.73,16.39 7,19.5 12,19.5C17,19.5 21.27,16.39 23,12C21.27,7.61 17,4.5 12,4.5Z"/></svg><div class="rw" style="top:707.25px"><span class="l">UvP L1 Time</span><span class="v">28 ms</span></div><svg class="ic" style="left:29.75px;top:777.25px" width="30" height="30" viewBox="0 0 24 24"><path d="M16.5,21C13.5,21 12.31,16.76 11.05,12.28C10.14,9.04 9,5 7.5,5C4.11,5 4,11.93 4,12H2C2,11.63 2.06,3 7.5,3C10.5,3 11.71,7.25 12.97,11.72C13.83,14.8 15,19 16.5,19C19.94,19 20.03,12.07 20.03,12H22.03C22.03,12.37 21.97,21 16.5,21Z"/></svg><div class="rw" style="top:767.25px"><span class="l">UvP L2</span><span class="v">29 V</span></div><svg class="ic" style="left:29.75px;top:837.25px" width="30" height="30" viewBox="0 0 24 24"><path d="M12,9A3,3 0 0,0 9,12A3,3 0 0,0 12,15A3,3 0 0,0 15,12A3,3 0 0,0 12,9M12,17A5,5 0 0,1 7,12A5,5 0 0,1 12,7A5,5 0 0,1 17,12A5,5 0 0,1 12,17M12,4.5C7,4.5 2.73,7.61 1,12C2.73,16.39 7,19.5 12,19.5C17,19.5 21.27,16.39 23,12C21.27,7.61 17,4.5 12,4.5Z"/></svg><div class="rw" style="top:827.25px"><span class="l">UvP L2 Time</span><span class="v">4 ms</span></div><svg class="ic" style="left:29.75px;top:897.25px" width="30" height="30" viewBox="0 0 24 24"><path d="M16.5,21C13.5,21 12.31,16.76 11.05,12.28C10.14,9.04 9,5 7.5,5C4.11,5 4,11.93 4,12H2C2,11.63 2.06,3 7.5,3C10.5,3 11.71,7.25 12.97,11.72C13.83,14.8 15,19 16.5,19C19.94,19 20.03,12.07 20.03,12H22.03C22.03,12.37 21.97,21 16.5,21Z"/></svg><div class="rw" style="top:887.25px"><span class="l">UvP L3</span><span class="v">29 V</span></div><svg class="ic" style="left:29.75px;top:957.25px" width="30" height="30" viewBox="0 0 24 24"><path d="M12,9A3,3 0 0,0 9,12A3,3 0 0,0 12,15A3,3 0 0,0 15,12A3,3 0 0,0 12,9M12,17A5,5 0 0,1 7,12A5,5 0 0,1 12,7A5,5 0 0,1 17,12A5,5 0 0,1 12,17M12,4.5C7,4.5 2.73,7.61 1,12C2.73,16.39 7,19.5 12,19.5C17,19.5 21.27,16.39 23,12C21.27,7.61 17,4.5 12,4.5Z"/></svg><div class="rw" style="top:947.25px"><span class="l">UvP L3 Time</span><span class="v">4 ms</span></div><div class="dv" style="top:1007.25px"></div><svg class="ic" style="left:29.75px;top:1028.5px" width="30" height="30" viewBox="0 0 24 24"><path d="M12,9A3,3 0 0,0 9,12A3,3 0 0,0 12,15A3,3 0 0,0 15,12A3,3 0 0,0 12,9M12,17A5,5 0 0,1 7,12A5,5 0 0,1 12,7A5,5 0 0,1 17,12A5,5 0 0,1 12,17M12,4.5C7,4.5 2.73,7.61 1,12C2.73,16.39 7,19.5 12,19.5C17,19.5 21.27,16.39 23,12C21.27,7.61 17,4.5 12,4.5Z"/></svg><div class="rw" style="top:1018.5px"><span class="l">Overfrequency Protection L1</span><span class="v">52 Hz</span></div><svg class="ic" style="left:29.75px;top:1088.5px" width="30" height="30" viewBox="0 0 24 24"><path d="M12,9A3,3 0 0,0 9,12A3,3 0 0,0 12,15A3,3 0 0,0 15,12A3,3 0 0,0 12,9M12,17A5,5 0 0,1 7,12A5,5 0 0,1 12,7A5,5 0 0,1 17,12A5,5 0 0,1 12,17M12,4.5C7,4.5 2.73,7.61 1,12C2.73,16.39 7,19.5 12,19.5C17,19.5 21.27,16.39 23,12C21.27,7.61 17,4.5 12,4.5Z"/></svg><div class="rw" style="top:1078.5px"><span class="l">OfP L1 Time</span><span class="v">10 ms</span></div><svg class="ic" style="left:29.75px;top:1148.5px" width="30" height="30" viewBox="0 0 24 24"><path d="M12,9A3,3 0 0,0 9,12A3,3 0 0,0 12,15A3,3 0 0,0 15,12A3,3 0 0,0 12,9M12,17A5,5 0 0,1 7,12A5,5 0 0,1 12,7A5,5 0 0,1 17,12A5,5 0 0,1 12,17M12,4.5C7,4.5 2.73,7.61 1,12C2.73,16.39 7,19.5 12,19.5C17,19.5 21.27,16.39 23,12C21.27,7.61 17,4.5 12,4.5Z"/></svg><div class="rw" style="top:1138.5px"><span class="l">OfP L2</span><span class="v">52 Hz</span></div><svg class="ic" style="left:29.75px;top:1208.5px" width="30" height="30" viewBox="0 0 24 24"><path d="M12,9A3,3 0 0,0 9,12A3,3 0 0,0 12,15A3,3 0 0,0 15,12A3,3 0 0,0 12,9M12,17A5,5 0 0,1 7,12A5,5 0 0,1 12,7A5,5 0 0,1 17,12A5,5 0 0,1 12,17M12,4.5C7,4.5 2.73,7.61 1,12C2.73,16.39 7,19.5 12,19.5C17,19.5 21.27,16.39 23,12C21.27,7.61 17,4.5 12,4.5Z"/></svg><div class="rw" style="top:1198.5px"><span class="l">OfP L2 Time</span><span class="v">10 ms</span></div><svg class="ic" style="left:29.75px;top:1268.5px" width="30" height="30" viewBox="0 0 24 24"><path d="M12,9A3,3 0 0,0 9,12A3,3 0 0,0 12,15A3,3 0 0,0 15,12A3,3 0 0,0 12,9M12,17A5,5 0 0,1 7,12A5,5 0 0,1 12,7A5,5 0 0,1 17,12A5,5 0 0,1 12,17M12,4.5C7,4.5 2.73,7.61 1,12C2.73,16.39 7,19.5 12,19.5C17,19.5 21.27,16.39 23,12C21.27,7.61 17,4.5 12,4.5Z"/></svg><div class="rw" style="top:1258.5px"><span class="l">OfP L3</span><span class="v">52 Hz</span></div><svg class="ic" style="left:29.75px;top:1328.5px" width="30" height="30" viewBox="0 0 24 24"><path d="M12,9A3,3 0 0,0 9,12A3,3 0 0,0 12,15A3,3 0 0,0 15,12A3,3 0 0,0 12,9M12,17A5,5 0 0,1 7,12A5,5 0 0,1 12,7A5,5 0 0,1 17,12A5,5 0 0,1 12,17M12,4.5C7,4.5 2.73,7.61 1,12C2.73,16.39 7,19.5 12,19.5C17,19.5 21.27,16.39 23,12C21.27,7.61 17,4.5 12,4.5Z"/></svg><div class="rw" style="top:1318.5px"><span class="l">OfP L3 Time</span><span class="v">10 ms</span></div><div class="dv" style="top:1378.5px"></div><svg class="ic" style="left:29.75px;top:1399.75px" width="30" height="30" viewBox="0 0 24 24"><path d="M12,9A3,3 0 0,0 9,12A3,3 0 0,0 12,15A3,3 0 0,0 15,12A3,3 0 0,0 12,9M12,17A5,5 0 0,1 7,12A5,5 0 0,1 12,7A5,5 0 0,1 17,12A5,5 0 0,1 12,17M12,4.5C7,4.5 2.73,7.61 1,12C2.73,16.39 7,19.5 12,19.5C17,19.5 21.27,16.39 23,12C21.27,7.61 17,4.5 12,4.5Z"/></svg><div class="rw" style="top:1389.75px"><span class="l">Underfrequency Protection L1</span><span class="v">47 Hz</span></div><svg class="ic" style="left:29.75px;top:1459.75px" width="30" height="30" viewBox="0 0 24 24"><path d="M12,9A3,3 0 0,0 9,12A3,3 0 0,0 12,15A3,3 0 0,0 15,12A3,3 0 0,0 12,9M12,17A5,5 0 0,1 7,12A5,5 0 0,1 12,7A5,5 0 0,1 17,12A5,5 0 0,1 12,17M12,4.5C7,4.5 2.73,7.61 1,12C2.73,16.39 7,19.5 12,19.5C17,19.5 21.27,16.39 23,12C21.27,7.61 17,4.5 12,4.5Z"/></svg><div class="rw" style="top:1449.75px"><span class="l">UfP L1 Time</span><span class="v">10 ms</span></div><svg class="ic" style="left:29.75px;top:1519.75px" width="30" height="30" viewBox="0 0 24 24"><path d="M12,9A3,3 0 0,0 9,12A3,3 0 0,0 12,15A3,3 0 0,0 15,12A3,3 0 0,0 12,9M12,17A5,5 0 0,1 7,12A5,5 0 0,1 12,7A5,5 0 0,1 17,12A5,5 0 0,1 12,17M12,4.5C7,4.5 2.73,7.61 1,12C2.73,16.39 7,19.5 12,19.5C17,19.5 21.27,16.39 23,12C21.27,7.61 17,4.5 12,4.5Z"/></svg><div class="rw" style="top:1509.75px"><span class="l">UfP L2</span><span class="v">47 Hz</span></div><svg class="ic" style="left:29.75px;top:1579.75px" width="30" height="30" viewBox="0 0 24 24"><path d="M12,9A3,3 0 0,0 9,12A3,3 0 0,0 12,15A3,3 0 0,0 15,12A3,3 0 0,0 12,9M12,17A5,5 0 0,1 7,12A5,5 0 0,1 12,7A5,5 0 0,1 17,12A5,5 0 0,1 12,17M12,4.5C7,4.5 2.73,7.61 1,12C2.73,16.39 7,19.5 12,19.5C17,19.5 21.27,16.39 23,12C21.27,7.61 17,4.5 12,4.5Z"/></svg><div class="rw" style="top:1569.75px"><span class="l">UfP L2 Time</span><span class="v">10 ms</span></div><svg class="ic" style="left:29.75px;top:1639.75px" width="30" height="30" viewBox="0 0 24 24"><path d="M12,9A3,3 0 0,0 9,12A3,3 0 0,0 12,15A3,3 0 0,0 15,12A3,3 0 0,0 12,9M12,17A5,5 0 0,1 7,12A5,5 0 0,1 12,7A5,5 0 0,1 17,12A5,5 0 0,1 12,17M12,4.5C7,4.5 2.73,7.61 1,12C2.73,16.39 7,19.5 12,19.5C17,19.5 21.27,16.39 23,12C21.27,7.61 17,4.5 12,4.5Z"/></svg><div class="rw" style="top:1629.75px"><span class="l">UfP L3</span><span class="v">47 Hz</span></div><svg class="ic" style="left:29.75px;top:1699.75px" width="30" height="30" viewBox="0 0 24 24"><path d="M12,9A3,3 0 0,0 9,12A3,3 0 0,0 12,15A3,3 0 0,0 15,12A3,3 0 0,0 12,9M12,17A5,5 0 0,1 7,12A5,5 0 0,1 12,7A5,5 0 0,1 17,12A5,5 0 0,1 12,17M12,4.5C7,4.5 2.73,7.61 1,12C2.73,16.39 7,19.5 12,19.5C17,19.5 21.27,16.39 23,12C21.27,7.61 17,4.5 12,4.5Z"/></svg><div class="rw" style="top:1689.75px"><span class="l">UfP L3 Time</span><span class="v">10 ms</span></div>
</div></body></html>
